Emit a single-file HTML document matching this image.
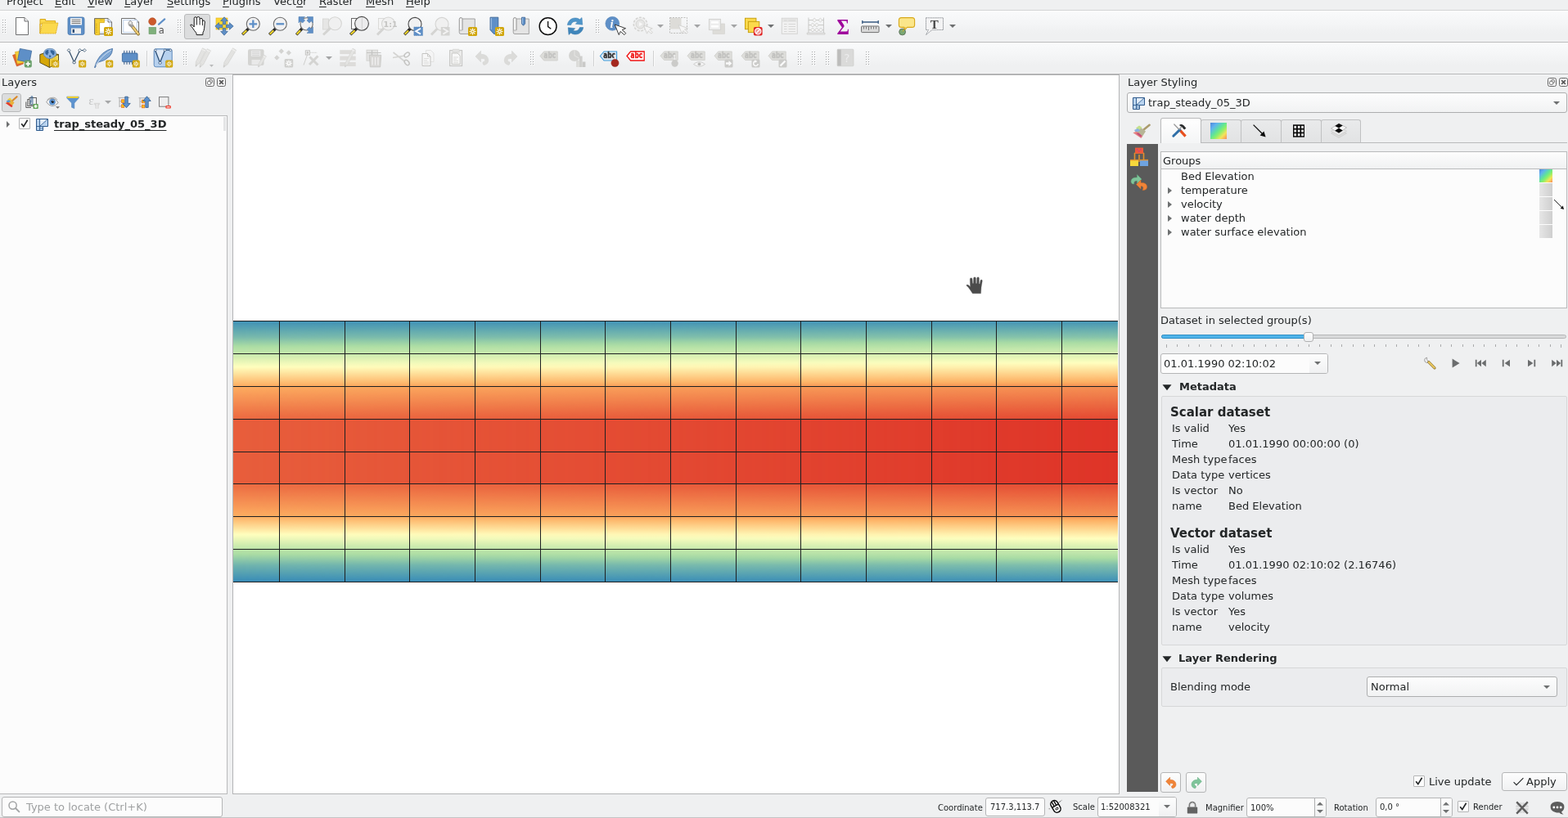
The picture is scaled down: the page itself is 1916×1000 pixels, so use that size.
<!DOCTYPE html>
<html lang="en">
<head>
<meta charset="utf-8">
<title>QGIS - trap_steady_05_3D</title>
<style>
html,body{margin:0;padding:0}
body{width:1916px;height:1000px;overflow:hidden;position:relative;background:#eff0f1;
 font-family:"DejaVu Sans","Liberation Sans",sans-serif;font-size:13px;line-height:16px;color:#232627}
div,svg{position:absolute;box-sizing:border-box}
#root{left:0;top:0;width:1916px;height:1000px;overflow:hidden;will-change:transform}
.t{white-space:nowrap}
.ic{overflow:visible}
u{text-decoration:underline;text-underline-offset:2px;text-decoration-thickness:1px;text-decoration-skip-ink:none}
.tb{left:0;width:1916px;height:38px;background:linear-gradient(to bottom,#ffffff 0px,#f9fafb 2px,#f4f5f6 16px,#eff0f1 28px,#eff0f1 36.5px,#f5f5f6 37px)}
.ln{left:0;width:1916px;height:1px}
.hd{background-image:radial-gradient(circle at 0.5px 0.5px,#c3c4c5 0.6px,transparent 0.7px),radial-gradient(circle at 3.5px 0.5px,#c3c4c5 0.6px,transparent 0.7px);background-size:5px 2px;background-repeat:repeat-y}
.view{background:#fcfcfc;border:1px solid #b9babb}
.edit{background:#fcfcfc;border:1px solid #b4b5b6;border-radius:3px}
.btn{border:1px solid #b4b5b6;border-radius:3px;background:linear-gradient(to bottom,#fdfdfd,#f0f1f2)}
.combo{border:1px solid #adaeaf;border-radius:3px;background:linear-gradient(to bottom,#fdfdfd,#f1f2f3)}
.gb{border:1px solid #d6d7d8;border-radius:2px;background:#ebecee}
.pressed{border:1px solid #b9babb;border-radius:3px;background:#dcddde}
.chk{border:1px solid #b4b5b6;background:#fcfcfc;border-radius:1px}
.dtb{border:1px solid #6c6e6f;border-radius:3px;background:#eff0f1}
</style>
</head>
<body>
<div id="root">
<div class="t" style="left:8px;top:-6px;">Pro<u>j</u>ect</div>
<div class="t" style="left:67px;top:-6px;"><u>E</u>dit</div>
<div class="t" style="left:107px;top:-6px;"><u>V</u>iew</div>
<div class="t" style="left:152px;top:-6px;"><u>L</u>ayer</div>
<div class="t" style="left:204px;top:-6px;"><u>S</u>ettings</div>
<div class="t" style="left:272px;top:-6px;"><u>P</u>lugins</div>
<div class="t" style="left:334px;top:-6px;">Vect<u>o</u>r</div>
<div class="t" style="left:390px;top:-6px;"><u>R</u>aster</div>
<div class="t" style="left:447px;top:-6px;"><u>M</u>esh</div>
<div class="t" style="left:496px;top:-6px;"><u>H</u>elp</div>
<div style="left:0px;top:12px;width:1916px;height:1px;background:#d2d3d4"></div>
<div class="tb" style="left:0px;top:13px;width:1916px;height:38px;"></div>
<div style="left:0px;top:51px;width:1916px;height:1px;background:#b7b8b9"></div>
<div class="tb" style="left:0px;top:52px;width:1916px;height:38px;"></div>
<div style="left:0px;top:90px;width:1916px;height:1px;background:#b3b4b5"></div>
<div style="left:0px;top:91px;width:1916px;height:1px;background:#f5f5f6"></div>
<svg style="left:3px;top:24px" width="6" height="18"><rect x="0" y="0" width="1" height="1" fill="#a6a7a8"/><rect x="1" y="1" width="1" height="1" fill="#fff"/><rect x="3" y="0" width="1" height="1" fill="#a6a7a8"/><rect x="4" y="1" width="1" height="1" fill="#fff"/><rect x="0" y="3" width="1" height="1" fill="#a6a7a8"/><rect x="1" y="4" width="1" height="1" fill="#fff"/><rect x="3" y="3" width="1" height="1" fill="#a6a7a8"/><rect x="4" y="4" width="1" height="1" fill="#fff"/><rect x="0" y="6" width="1" height="1" fill="#a6a7a8"/><rect x="1" y="7" width="1" height="1" fill="#fff"/><rect x="3" y="6" width="1" height="1" fill="#a6a7a8"/><rect x="4" y="7" width="1" height="1" fill="#fff"/><rect x="0" y="9" width="1" height="1" fill="#a6a7a8"/><rect x="1" y="10" width="1" height="1" fill="#fff"/><rect x="3" y="9" width="1" height="1" fill="#a6a7a8"/><rect x="4" y="10" width="1" height="1" fill="#fff"/><rect x="0" y="12" width="1" height="1" fill="#a6a7a8"/><rect x="1" y="13" width="1" height="1" fill="#fff"/><rect x="3" y="12" width="1" height="1" fill="#a6a7a8"/><rect x="4" y="13" width="1" height="1" fill="#fff"/><rect x="0" y="15" width="1" height="1" fill="#a6a7a8"/><rect x="1" y="16" width="1" height="1" fill="#fff"/><rect x="3" y="15" width="1" height="1" fill="#a6a7a8"/><rect x="4" y="16" width="1" height="1" fill="#fff"/></svg>
<svg style="left:217px;top:24px" width="6" height="18"><rect x="0" y="0" width="1" height="1" fill="#a6a7a8"/><rect x="1" y="1" width="1" height="1" fill="#fff"/><rect x="3" y="0" width="1" height="1" fill="#a6a7a8"/><rect x="4" y="1" width="1" height="1" fill="#fff"/><rect x="0" y="3" width="1" height="1" fill="#a6a7a8"/><rect x="1" y="4" width="1" height="1" fill="#fff"/><rect x="3" y="3" width="1" height="1" fill="#a6a7a8"/><rect x="4" y="4" width="1" height="1" fill="#fff"/><rect x="0" y="6" width="1" height="1" fill="#a6a7a8"/><rect x="1" y="7" width="1" height="1" fill="#fff"/><rect x="3" y="6" width="1" height="1" fill="#a6a7a8"/><rect x="4" y="7" width="1" height="1" fill="#fff"/><rect x="0" y="9" width="1" height="1" fill="#a6a7a8"/><rect x="1" y="10" width="1" height="1" fill="#fff"/><rect x="3" y="9" width="1" height="1" fill="#a6a7a8"/><rect x="4" y="10" width="1" height="1" fill="#fff"/><rect x="0" y="12" width="1" height="1" fill="#a6a7a8"/><rect x="1" y="13" width="1" height="1" fill="#fff"/><rect x="3" y="12" width="1" height="1" fill="#a6a7a8"/><rect x="4" y="13" width="1" height="1" fill="#fff"/><rect x="0" y="15" width="1" height="1" fill="#a6a7a8"/><rect x="1" y="16" width="1" height="1" fill="#fff"/><rect x="3" y="15" width="1" height="1" fill="#a6a7a8"/><rect x="4" y="16" width="1" height="1" fill="#fff"/></svg>
<svg style="left:728px;top:24px" width="6" height="18"><rect x="0" y="0" width="1" height="1" fill="#a6a7a8"/><rect x="1" y="1" width="1" height="1" fill="#fff"/><rect x="3" y="0" width="1" height="1" fill="#a6a7a8"/><rect x="4" y="1" width="1" height="1" fill="#fff"/><rect x="0" y="3" width="1" height="1" fill="#a6a7a8"/><rect x="1" y="4" width="1" height="1" fill="#fff"/><rect x="3" y="3" width="1" height="1" fill="#a6a7a8"/><rect x="4" y="4" width="1" height="1" fill="#fff"/><rect x="0" y="6" width="1" height="1" fill="#a6a7a8"/><rect x="1" y="7" width="1" height="1" fill="#fff"/><rect x="3" y="6" width="1" height="1" fill="#a6a7a8"/><rect x="4" y="7" width="1" height="1" fill="#fff"/><rect x="0" y="9" width="1" height="1" fill="#a6a7a8"/><rect x="1" y="10" width="1" height="1" fill="#fff"/><rect x="3" y="9" width="1" height="1" fill="#a6a7a8"/><rect x="4" y="10" width="1" height="1" fill="#fff"/><rect x="0" y="12" width="1" height="1" fill="#a6a7a8"/><rect x="1" y="13" width="1" height="1" fill="#fff"/><rect x="3" y="12" width="1" height="1" fill="#a6a7a8"/><rect x="4" y="13" width="1" height="1" fill="#fff"/><rect x="0" y="15" width="1" height="1" fill="#a6a7a8"/><rect x="1" y="16" width="1" height="1" fill="#fff"/><rect x="3" y="15" width="1" height="1" fill="#a6a7a8"/><rect x="4" y="16" width="1" height="1" fill="#fff"/></svg>
<div class="pressed" style="left:225px;top:17px;width:32px;height:31px;"></div>
<svg class="ic" style="left:15px;top:20px" width="24" height="24" viewBox="0 0 24 24"><path d="M4.5 1.5H15L19.5 6V22.5H4.5Z" fill="#fff" stroke="#6e6f70" stroke-width="1" stroke-linejoin="round"/><path d="M15 1.5V6H19.5" fill="#f3f3f3" stroke="#6e6f70" stroke-width="1" stroke-linejoin="round"/></svg>
<svg class="ic" style="left:48px;top:20px" width="24" height="24" viewBox="0 0 24 24"><path d="M1 21V3.5H7.6V5.6H19.6V9H1Z" fill="#fbd94b" stroke="#d9a81e" stroke-width="1" stroke-linejoin="round"/><path d="M1 21L3.6 8H23L20.2 21Z" fill="#fbd94d" stroke="#d9a81e" stroke-width="1" stroke-dasharray="1.2 0.8" stroke-linejoin="round"/></svg>
<svg class="ic" style="left:81px;top:20px" width="24" height="24" viewBox="0 0 24 24"><rect x="2" y="1" width="20" height="21.5" rx="2.2" fill="#5e8fc7" stroke="#4a78ad" stroke-width="0.8"/><rect x="5" y="2.2" width="14" height="8.3" fill="#f4f4f4"/><path d="M6.5 4.3H17.5M6.5 6.4H17.5M6.5 8.5H17.5" stroke="#666" stroke-width="0.9"/><rect x="6" y="14.5" width="12" height="6.8" fill="#ededed"/><rect x="7.6" y="15.8" width="2.4" height="4.2" fill="#2c4d77"/></svg>
<svg class="ic" style="left:114px;top:20px" width="24" height="24" viewBox="0 0 24 24"><path d="M1.5 2.5H18L22.5 7V21.5H1.5Z" fill="#fff" stroke="#6e6f70" stroke-width="1" stroke-linejoin="round"/><path d="M18 2.5V7H22.5" fill="#f3f3f3" stroke="#6e6f70" stroke-width="1" stroke-linejoin="round"/><rect x="4" y="4.5" width="16.5" height="15" fill="none" stroke="#b8cdea" stroke-width="0.8"/><path d="M2.6 3.2H13.4V7.6H7.6V22.6H2.6Z" fill="#f6cf35" stroke="#d1a60c" stroke-width="0.8"/><path d="M3 9.5H5M3 11.5H5M3 13.5H5M3 15.5H5M3 17.5H5M3 19.5H5M8.5 3.6V5.4M10.5 3.6V5.4" stroke="#d1a60c" stroke-width="0.7"/><rect x="13" y="13" width="11" height="11" rx="1.6" fill="#d1a60c"/><path d="M14.54 18.50L22.46 18.50M15.70 15.70L21.30 21.30M18.50 14.54L18.50 22.46M21.30 15.70L15.70 21.30" stroke="#fff" stroke-width="1.15" fill="none"/><circle cx="18.5" cy="18.5" r="1.10" fill="#d1a60c"/></svg>
<svg class="ic" style="left:147px;top:20px" width="24" height="24" viewBox="0 0 24 24"><path d="M1.5 2.5H18L22.5 7V21.5H1.5Z" fill="#fff" stroke="#6e6f70" stroke-width="1" stroke-linejoin="round"/><path d="M18 2.5V7H22.5" fill="#f3f3f3" stroke="#6e6f70" stroke-width="1" stroke-linejoin="round"/><rect x="3.8" y="4.6" width="16.5" height="15" fill="#fdfdff" stroke="#b8cdea" stroke-width="0.9"/><path d="M14.2 11.6L22 21.6" stroke="#8c7433" stroke-width="3.8" stroke-linecap="round"/><path d="M14.4 11.8L21.8 21.4" stroke="#f1cf7a" stroke-width="2.2" stroke-linecap="round"/><path d="M12.2 5.4A3.6 3.6 0 1 0 16.2 11.2L14.2 9.8L14.6 7.2Z" fill="#e9e9e9" stroke="#8a8a8a" stroke-width="0.9" stroke-linejoin="round"/><path d="M11 10.2L15.2 12.8" stroke="#9a9a9a" stroke-width="2.6"/></svg>
<svg class="ic" style="left:180px;top:20px" width="24" height="24" viewBox="0 0 24 24"><circle cx="6.2" cy="6.3" r="4.5" fill="#cc5a2c" stroke="#b04a22" stroke-width="0.6"/><path d="M14 9.8L21.2 3.4" stroke="#5e8fc7" stroke-width="2.2" stroke-linecap="round"/><rect x="2" y="13.4" width="8.6" height="8.2" fill="#7fb07c" stroke="#6a9a67" stroke-width="0.6"/><text x="13.8" y="21.4" font-family="DejaVu Sans,Liberation Sans,sans-serif" font-size="11.5" fill="#555">a</text></svg>
<svg class="ic" style="left:229px;top:20px" width="24" height="24" viewBox="0 0 24 24"><path d="M8.2 13L8.2 2.4Q8.2 0.8 9.8 0.8Q11.4 0.8 11.4 2.4L11.6 2Q11.8 0.4 13.4 0.5Q15 0.6 15 2.2L15.2 3.4Q15.6 2.2 17 2.4Q18.4 2.6 18.4 4.2L18.5 6Q19 4.8 20.2 5.1Q21.4 5.4 21.3 7L20.6 14.5Q20.2 18 19 19.8L18.8 22.6H11.2L10.9 20.4Q8.6 17.8 6.8 14.8Q5.4 12.4 4 11.6Q3.2 10.6 4.2 10Q6 9.6 8.2 13Z" fill="#fff" stroke="#161616" stroke-width="1" stroke-linejoin="round"/><path d="M11.5 2.4V10.5M15.1 3V10.5M18.45 5.5V11.2" fill="none" stroke="#161616" stroke-width="0.9"/></svg>
<svg class="ic" style="left:262px;top:20px" width="24" height="24" viewBox="0 0 24 24"><rect x="2" y="2" width="14" height="14" fill="#fbd632" stroke="#e0b020" stroke-width="0.6"/><path d="M12 0.8L16.3 5.6H13.7V9.8H10.3V5.6H7.7Z M12 23.2L16.3 18.4H13.7V14.4H10.3V18.4H7.7Z M0.8 12L5.6 7.7V10.3H9.8V13.7H5.6V16.3Z M23.2 12L18.4 7.7V10.3H14.4V13.7H18.4V16.3Z" fill="#5e8fc7" stroke="#3c6595" stroke-width="0.7" stroke-linejoin="round"/></svg>
<svg class="ic" style="left:295px;top:20px" width="24" height="24" viewBox="0 0 24 24"><path d="M1.2 22.3L8.64 14.96" stroke="#2a2a2a" stroke-width="3.4" stroke-linecap="butt"/><path d="M1.70 21.80L6.26 17.31" stroke="#f7d82b" stroke-width="2.1"/><circle cx="14.3" cy="9.3" r="8" fill="#f1f1f2" stroke="#6b6b6b" stroke-width="1.1"/><path d="M9.5 9.3H19.1M14.3 4.5V14.1" stroke="#5e8fc7" stroke-width="2.3"/></svg>
<svg class="ic" style="left:328px;top:20px" width="24" height="24" viewBox="0 0 24 24"><path d="M1.2 22.3L8.64 14.96" stroke="#2a2a2a" stroke-width="3.4" stroke-linecap="butt"/><path d="M1.70 21.80L6.26 17.31" stroke="#f7d82b" stroke-width="2.1"/><circle cx="14.3" cy="9.3" r="8" fill="#f1f1f2" stroke="#6b6b6b" stroke-width="1.1"/><path d="M9.5 9.3H19.1" stroke="#5e8fc7" stroke-width="2.3"/></svg>
<svg class="ic" style="left:361px;top:20px" width="24" height="24" viewBox="0 0 24 24"><path d="M1.2 22.3L8.23 14.77" stroke="#2a2a2a" stroke-width="3.4" stroke-linecap="butt"/><path d="M1.70 21.80L5.98 17.18" stroke="#f7d82b" stroke-width="2.1"/><circle cx="13.6" cy="9.4" r="7.6" fill="#f1f1f2" stroke="#6b6b6b" stroke-width="1.1"/><path d="M4 0.6H11.5L9.3 2.8L11.6 5.1L8.6 8.1L6.3 5.8L4 8Z M21.5 0.6V8L19.3 5.8L17 8.1L14 5.1L16.3 2.8L14 0.6Z M21.5 20.4H14L16.3 18.2L14 15.9L17 12.9L19.3 15.2L21.5 13Z" fill="#5e8fc7" stroke="#4a78ad" stroke-width="0.5"/></svg>
<svg class="ic" style="left:394px;top:20px" width="24" height="24" viewBox="0 0 24 24"><rect x="0.5" y="3" width="7" height="13" fill="#e6e6e5" stroke="#d4d4d2" stroke-width="0.8"/><path d="M1.0 22.5L9.64 14.46" stroke="#d4d4d2" stroke-width="3"/><circle cx="15.3" cy="8.8" r="8" fill="#f0f0f0" stroke="#d4d4d2" stroke-width="1.1"/></svg>
<svg class="ic" style="left:427px;top:20px" width="24" height="24" viewBox="0 0 24 24"><rect x="2.5" y="2.5" width="7" height="13" fill="#fafafa" stroke="#6b6b6b" stroke-width="1"/><path d="M1.2 22.3L9.06 14.74" stroke="#2a2a2a" stroke-width="3.4" stroke-linecap="butt"/><path d="M1.70 21.80L6.55 17.16" stroke="#f7d82b" stroke-width="2.1"/><circle cx="15" cy="8.8" r="8.4" fill="#ececed" stroke="#4a4a4a" stroke-width="1.1"/><path d="M15.4 2V15.5" stroke="#c9c9c9" stroke-width="0.8"/></svg>
<svg class="ic" style="left:460px;top:20px" width="24" height="24" viewBox="0 0 24 24"><rect x="2.5" y="2.5" width="7" height="13" fill="#f4f4f4" stroke="#d4d4d2" stroke-width="0.8"/><path d="M1.0 22.5L8.84 14.66" stroke="#d4d4d2" stroke-width="3"/><circle cx="14.5" cy="9" r="8" fill="#f0f0f0" stroke="#d4d4d2" stroke-width="1.1"/><text x="8.6" y="12.8" font-family="DejaVu Sans,Liberation Sans,sans-serif" font-weight="bold" font-size="9.5" fill="#c4c4c2">1:1</text></svg>
<svg class="ic" style="left:493px;top:20px" width="24" height="24" viewBox="0 0 24 24"><path d="M1.2 22.3L8.34 15.06" stroke="#2a2a2a" stroke-width="3.4" stroke-linecap="butt"/><path d="M1.70 21.80L6.06 17.37" stroke="#f7d82b" stroke-width="2.1"/><circle cx="14" cy="9.4" r="8" fill="#f1f1f2" stroke="#4a4a4a" stroke-width="1.1"/><rect x="12.8" y="13" width="10.7" height="10.5" fill="#5e8fc7" stroke="#4a78ad" stroke-width="0.6" stroke-dasharray="1 0.7"/><path d="M21 14.8L15.2 18.2L21 21.6" fill="none" stroke="#fff" stroke-width="1.9"/></svg>
<svg class="ic" style="left:526px;top:20px" width="24" height="24" viewBox="0 0 24 24"><path d="M1.0 22.5L8.34 15.06" stroke="#d4d4d2" stroke-width="3"/><circle cx="14" cy="9.4" r="8" fill="#f0f0f0" stroke="#d4d4d2" stroke-width="1.1"/><rect x="12.8" y="13" width="10.7" height="10.5" fill="#d4d4d2"/><path d="M15.3 14.8L21.1 18.2L15.3 21.6" fill="none" stroke="#f2f2f2" stroke-width="1.9"/></svg>
<svg class="ic" style="left:559px;top:20px" width="24" height="24" viewBox="0 0 24 24"><path d="M4.5 3H21.3V21.5H4Q2.2 21.5 2.2 19.5V3.5Q2.2 1.5 4.2 1.5Q6 1.5 6 3.5V17" fill="#e4e4e4" stroke="#9a9a9a" stroke-width="0.9" stroke-linejoin="round"/><path d="M2.5 3.5Q2.5 1.8 4.2 1.8Q5.8 1.8 5.8 3.5V17H2.5Z" fill="#f6f6f6" stroke="#9a9a9a" stroke-width="0.7"/><rect x="13" y="13" width="11" height="11" rx="1.6" fill="#d1a60c"/><path d="M14.54 18.50L22.46 18.50M15.70 15.70L21.30 21.30M18.50 14.54L18.50 22.46M21.30 15.70L15.70 21.30" stroke="#fff" stroke-width="1.15" fill="none"/><circle cx="18.5" cy="18.5" r="1.10" fill="#d1a60c"/></svg>
<svg class="ic" style="left:592px;top:20px" width="24" height="24" viewBox="0 0 24 24"><path d="M7 1.2H16.8V21.5H11.5L7 16.5Z" fill="#5e8fc7" stroke="#3c6595" stroke-width="0.9" stroke-linejoin="round"/><path d="M8.3 2V16" stroke="#a9c7ea" stroke-width="1"/><rect x="13" y="13" width="11" height="11" rx="1.6" fill="#d1a60c"/><path d="M14.54 18.50L22.46 18.50M15.70 15.70L21.30 21.30M18.50 14.54L18.50 22.46M21.30 15.70L15.70 21.30" stroke="#fff" stroke-width="1.15" fill="none"/><circle cx="18.5" cy="18.5" r="1.10" fill="#d1a60c"/></svg>
<svg class="ic" style="left:625px;top:20px" width="24" height="24" viewBox="0 0 24 24"><path d="M4.5 3H21.3V21.5H4Q2.2 21.5 2.2 19.5V3.5Q2.2 1.5 4.2 1.5Q6 1.5 6 3.5V17" fill="#e4e4e4" stroke="#9a9a9a" stroke-width="0.9" stroke-linejoin="round"/><path d="M2.5 3.5Q2.5 1.8 4.2 1.8Q5.8 1.8 5.8 3.5V17H2.5Z" fill="#f6f6f6" stroke="#9a9a9a" stroke-width="0.7"/><path d="M12.5 1.2H16.6V9L14.5 11.3L12.5 9Z" fill="#5e8fc7" stroke="#3c6595" stroke-width="0.8"/><path d="M13.5 2V9" stroke="#a9c7ea" stroke-width="0.9"/></svg>
<svg class="ic" style="left:658px;top:20px" width="24" height="24" viewBox="0 0 24 24"><circle cx="11.6" cy="12.2" r="10.4" fill="#fff" stroke="#0d0d0d" stroke-width="1.5"/><path d="M11.6 6V12.6L15.3 15.2" fill="none" stroke="#0d0d0d" stroke-width="1.3"/></svg>
<svg class="ic" style="left:691px;top:20px" width="24" height="24" viewBox="0 0 24 24"><path d="M2.3 10.5A9.6 9.6 0 0 1 17.5 3.8L20 1.5L20.8 10.2L12.3 9.3L14.6 6.8A5.6 5.6 0 0 0 6.6 10.5Z" fill="#4f95c9" stroke="#3d7eb3" stroke-width="0.5"/><path d="M21.7 13.5A9.6 9.6 0 0 1 6.5 20.2L4 22.5L3.2 13.8L11.7 14.7L9.4 17.2A5.6 5.6 0 0 0 17.4 13.5Z" fill="#3f86bb" stroke="#3474a8" stroke-width="0.5"/></svg>
<svg class="ic" style="left:739px;top:20px" width="24" height="24" viewBox="0 0 24 24"><circle cx="9.3" cy="8.8" r="8.4" fill="#5e8fc7" stroke="#4f7fb6" stroke-width="0.6"/><text x="6.4" y="14" font-family="Liberation Serif,DejaVu Serif,serif" font-style="italic" font-weight="bold" font-size="14.5" fill="#fff">i</text><path d="M12.20 10.00L17.28 22.58L19.15 18.39L23.90 22.58L25.76 20.56L21.16 16.43L25.54 14.66Z" fill="#fff" stroke="#3a3a3a" stroke-width="1" stroke-linejoin="round"/></svg>
<svg class="ic" style="left:773px;top:20px" width="24" height="24" viewBox="0 0 24 24"><circle cx="9.5" cy="9.5" r="8.2" fill="#f0f0f0" stroke="#d4d4d2" stroke-width="1.6" stroke-dasharray="3 1.6"/><circle cx="9.5" cy="9.5" r="5.4" fill="#e6e6e5" stroke="#d4d4d2" stroke-width="1"/><path d="M7.8 6.8V12.2L12.3 9.5Z" fill="#f8f8f8"/><path d="M13.50 11.00L17.59 21.13L19.10 17.75L22.92 21.13L24.41 19.50L20.72 16.18L24.24 14.76Z" fill="#f6f6f6" stroke="#d4d4d2" stroke-width="1" stroke-linejoin="round"/></svg>
<svg class="ic" style="left:817px;top:20px" width="24" height="24" viewBox="0 0 24 24"><rect x="2" y="2" width="13.5" height="13.5" fill="#dddcd8"/><rect x="1.5" y="1.5" width="21" height="19" fill="none" stroke="#bdbdbb" stroke-width="1" stroke-dasharray="2 1.4"/><path d="M12.00 10.50L16.31 21.16L17.89 17.61L21.92 21.16L23.49 19.45L19.60 15.95L23.30 14.45Z" fill="#f6f6f6" stroke="#d4d4d2" stroke-width="1" stroke-linejoin="round"/></svg>
<svg class="ic" style="left:863px;top:20px" width="24" height="24" viewBox="0 0 24 24"><rect x="8" y="9" width="14.5" height="12.5" fill="#dddcd8" stroke="#d4d4d2" stroke-width="0.7"/><rect x="3.5" y="3.5" width="14" height="13" fill="#eeeeee" stroke="#d4d4d2" stroke-width="1.1"/><rect x="6" y="6" width="9" height="2.6" fill="#fff"/><rect x="6" y="11" width="9" height="2.6" fill="#fff"/></svg>
<svg class="ic" style="left:908px;top:20px" width="24" height="24" viewBox="0 0 24 24"><rect x="2.5" y="2.3" width="13.4" height="13.4" fill="#fbd94b" stroke="#c9a211" stroke-width="1"/><rect x="6.4" y="6.4" width="13.4" height="13.2" fill="#fbd94b" stroke="#c9a211" stroke-width="1"/><rect x="12.9" y="13.1" width="10.7" height="10.5" rx="1.8" fill="#e02424"/><circle cx="18.25" cy="18.35" r="3.7" fill="#f29a9a" stroke="#fff" stroke-width="1.1"/><path d="M15.7 20.9L20.8 15.8" stroke="#fff" stroke-width="1.3"/></svg>
<svg class="ic" style="left:952px;top:20px" width="24" height="24" viewBox="0 0 24 24"><rect x="3.3" y="2.3" width="19" height="19" fill="#f1f1f1" stroke="#d4d4d2" stroke-width="1"/><rect x="3.8" y="2.8" width="18" height="4.2" fill="#e6e6e5"/><path d="M6 5H9.5M11.5 5H20M6 9.5H9.5M11.5 9.5H20M6 12.5H9.5M11.5 12.5H20M6 15.5H9.5M11.5 15.5H20M6 18.5H9.5M11.5 18.5H20" stroke="#d4d4d2" stroke-width="0.9"/></svg>
<svg class="ic" style="left:985px;top:20px" width="24" height="24" viewBox="0 0 24 24"><path d="M3 1.6V20M21.4 1.6V20M3 4.6H21.4M3 10.6H21.4M3 16.6H21.4" fill="none" stroke="#c4c4c2" stroke-width="0.9"/><path d="M1.2 20.2H23V22H1.2Z" fill="#ececec" stroke="#c4c4c2" stroke-width="0.7"/><path d="M7.799999999999999 4.6l2.4 -2.3l2.4 2.3l-2.4 2.3z" fill="#f6f6f6" stroke="#c4c4c2" stroke-width="0.7"/><path d="M14.999999999999998 4.6l2.4 -2.3l2.4 2.3l-2.4 2.3z" fill="#f6f6f6" stroke="#c4c4c2" stroke-width="0.7"/><path d="M5.6 10.6l2.4 -2.3l2.4 2.3l-2.4 2.3z" fill="#f6f6f6" stroke="#c4c4c2" stroke-width="0.7"/><path d="M10.6 10.6l2.4 -2.3l2.4 2.3l-2.4 2.3z" fill="#f6f6f6" stroke="#c4c4c2" stroke-width="0.7"/><path d="M5.6 16.6l2.4 -2.3l2.4 2.3l-2.4 2.3z" fill="#f6f6f6" stroke="#c4c4c2" stroke-width="0.7"/><path d="M10.6 16.6l2.4 -2.3l2.4 2.3l-2.4 2.3z" fill="#f6f6f6" stroke="#c4c4c2" stroke-width="0.7"/><path d="M15.6 16.6l2.4 -2.3l2.4 2.3l-2.4 2.3z" fill="#f6f6f6" stroke="#c4c4c2" stroke-width="0.7"/></svg>
<svg class="ic" style="left:1018px;top:20px" width="24" height="24" viewBox="0 0 24 24"><text x="4.6" y="21.6" font-family="Liberation Serif,DejaVu Serif,serif" font-weight="bold" font-size="27" fill="#9f059c" textLength="15.5" lengthAdjust="spacingAndGlyphs">Σ</text></svg>
<svg class="ic" style="left:1051px;top:20px" width="24" height="24" viewBox="0 0 24 24"><path d="M2.8 7H22.2" stroke="#2c5079" stroke-width="1.4"/><path d="M2.8 5V9M22.2 5V9" stroke="#2c5079" stroke-width="1.2"/><rect x="1.6" y="12" width="21.4" height="7.6" rx="0.8" fill="#d9d9d9" stroke="#6f6f6f" stroke-width="1"/><path d="M4.5 12.5V15.5M7.5 12.5V15.5M10.5 12.5V17M13.5 12.5V15.5M16.5 12.5V15.5M19.5 12.5V15.5" stroke="#6f6f6f" stroke-width="0.9"/></svg>
<svg class="ic" style="left:1096px;top:20px" width="24" height="24" viewBox="0 0 24 24"><path d="M5.5 1.6H18.5Q21.6 1.6 21.6 4.6V10.4Q21.6 13.4 18.5 13.4H12.5L8 18.5L9 13.4H5.5Q2.4 13.4 2.4 10.4V4.6Q2.4 1.6 5.5 1.6Z" fill="#fbe68a" stroke="#d8a81a" stroke-width="1.1" stroke-linejoin="round"/><circle cx="6.6" cy="19" r="3.9" fill="#7aa874" stroke="#5c6f5a" stroke-width="0.9"/><path d="M7 18.6L10.5 13.5" stroke="#d8a81a" stroke-width="1"/></svg>
<svg class="ic" style="left:1130px;top:20px" width="24" height="24" viewBox="0 0 24 24"><path d="M1.5 1.8H22.5V16.5H9L1.5 22.6L4.5 16.5H1.5Z" fill="#f3f3f4" stroke="#8b8f94" stroke-width="0.9" stroke-dasharray="1.5 0.6" stroke-linejoin="round"/><text x="6.8" y="14.6" font-family="Liberation Serif,DejaVu Serif,serif" font-weight="bold" font-size="15" fill="#474747">T</text></svg>
<svg class="ic" style="left:803px;top:30px" width="8" height="4" viewBox="0 0 8 4"><path d="M0 0H8L4 4Z" fill="#a3a4a5"/></svg>
<svg class="ic" style="left:848px;top:30px" width="8" height="4" viewBox="0 0 8 4"><path d="M0 0H8L4 4Z" fill="#a3a4a5"/></svg>
<svg class="ic" style="left:893px;top:30px" width="8" height="4" viewBox="0 0 8 4"><path d="M0 0H8L4 4Z" fill="#a3a4a5"/></svg>
<svg class="ic" style="left:938px;top:30px" width="8" height="4" viewBox="0 0 8 4"><path d="M0 0H8L4 4Z" fill="#6e7071"/></svg>
<svg class="ic" style="left:1082px;top:30px" width="8" height="4" viewBox="0 0 8 4"><path d="M0 0H8L4 4Z" fill="#6e7071"/></svg>
<svg class="ic" style="left:1160px;top:30px" width="8" height="4" viewBox="0 0 8 4"><path d="M0 0H8L4 4Z" fill="#6e7071"/></svg>
<svg style="left:3px;top:63px" width="6" height="18"><rect x="0" y="0" width="1" height="1" fill="#a6a7a8"/><rect x="1" y="1" width="1" height="1" fill="#fff"/><rect x="3" y="0" width="1" height="1" fill="#a6a7a8"/><rect x="4" y="1" width="1" height="1" fill="#fff"/><rect x="0" y="3" width="1" height="1" fill="#a6a7a8"/><rect x="1" y="4" width="1" height="1" fill="#fff"/><rect x="3" y="3" width="1" height="1" fill="#a6a7a8"/><rect x="4" y="4" width="1" height="1" fill="#fff"/><rect x="0" y="6" width="1" height="1" fill="#a6a7a8"/><rect x="1" y="7" width="1" height="1" fill="#fff"/><rect x="3" y="6" width="1" height="1" fill="#a6a7a8"/><rect x="4" y="7" width="1" height="1" fill="#fff"/><rect x="0" y="9" width="1" height="1" fill="#a6a7a8"/><rect x="1" y="10" width="1" height="1" fill="#fff"/><rect x="3" y="9" width="1" height="1" fill="#a6a7a8"/><rect x="4" y="10" width="1" height="1" fill="#fff"/><rect x="0" y="12" width="1" height="1" fill="#a6a7a8"/><rect x="1" y="13" width="1" height="1" fill="#fff"/><rect x="3" y="12" width="1" height="1" fill="#a6a7a8"/><rect x="4" y="13" width="1" height="1" fill="#fff"/><rect x="0" y="15" width="1" height="1" fill="#a6a7a8"/><rect x="1" y="16" width="1" height="1" fill="#fff"/><rect x="3" y="15" width="1" height="1" fill="#a6a7a8"/><rect x="4" y="16" width="1" height="1" fill="#fff"/></svg>
<svg style="left:224px;top:63px" width="6" height="18"><rect x="0" y="0" width="1" height="1" fill="#a6a7a8"/><rect x="1" y="1" width="1" height="1" fill="#fff"/><rect x="3" y="0" width="1" height="1" fill="#a6a7a8"/><rect x="4" y="1" width="1" height="1" fill="#fff"/><rect x="0" y="3" width="1" height="1" fill="#a6a7a8"/><rect x="1" y="4" width="1" height="1" fill="#fff"/><rect x="3" y="3" width="1" height="1" fill="#a6a7a8"/><rect x="4" y="4" width="1" height="1" fill="#fff"/><rect x="0" y="6" width="1" height="1" fill="#a6a7a8"/><rect x="1" y="7" width="1" height="1" fill="#fff"/><rect x="3" y="6" width="1" height="1" fill="#a6a7a8"/><rect x="4" y="7" width="1" height="1" fill="#fff"/><rect x="0" y="9" width="1" height="1" fill="#a6a7a8"/><rect x="1" y="10" width="1" height="1" fill="#fff"/><rect x="3" y="9" width="1" height="1" fill="#a6a7a8"/><rect x="4" y="10" width="1" height="1" fill="#fff"/><rect x="0" y="12" width="1" height="1" fill="#a6a7a8"/><rect x="1" y="13" width="1" height="1" fill="#fff"/><rect x="3" y="12" width="1" height="1" fill="#a6a7a8"/><rect x="4" y="13" width="1" height="1" fill="#fff"/><rect x="0" y="15" width="1" height="1" fill="#a6a7a8"/><rect x="1" y="16" width="1" height="1" fill="#fff"/><rect x="3" y="15" width="1" height="1" fill="#a6a7a8"/><rect x="4" y="16" width="1" height="1" fill="#fff"/></svg>
<svg style="left:648px;top:63px" width="6" height="18"><rect x="0" y="0" width="1" height="1" fill="#a6a7a8"/><rect x="1" y="1" width="1" height="1" fill="#fff"/><rect x="3" y="0" width="1" height="1" fill="#a6a7a8"/><rect x="4" y="1" width="1" height="1" fill="#fff"/><rect x="0" y="3" width="1" height="1" fill="#a6a7a8"/><rect x="1" y="4" width="1" height="1" fill="#fff"/><rect x="3" y="3" width="1" height="1" fill="#a6a7a8"/><rect x="4" y="4" width="1" height="1" fill="#fff"/><rect x="0" y="6" width="1" height="1" fill="#a6a7a8"/><rect x="1" y="7" width="1" height="1" fill="#fff"/><rect x="3" y="6" width="1" height="1" fill="#a6a7a8"/><rect x="4" y="7" width="1" height="1" fill="#fff"/><rect x="0" y="9" width="1" height="1" fill="#a6a7a8"/><rect x="1" y="10" width="1" height="1" fill="#fff"/><rect x="3" y="9" width="1" height="1" fill="#a6a7a8"/><rect x="4" y="10" width="1" height="1" fill="#fff"/><rect x="0" y="12" width="1" height="1" fill="#a6a7a8"/><rect x="1" y="13" width="1" height="1" fill="#fff"/><rect x="3" y="12" width="1" height="1" fill="#a6a7a8"/><rect x="4" y="13" width="1" height="1" fill="#fff"/><rect x="0" y="15" width="1" height="1" fill="#a6a7a8"/><rect x="1" y="16" width="1" height="1" fill="#fff"/><rect x="3" y="15" width="1" height="1" fill="#a6a7a8"/><rect x="4" y="16" width="1" height="1" fill="#fff"/></svg>
<svg style="left:975px;top:63px" width="6" height="18"><rect x="0" y="0" width="1" height="1" fill="#a6a7a8"/><rect x="1" y="1" width="1" height="1" fill="#fff"/><rect x="3" y="0" width="1" height="1" fill="#a6a7a8"/><rect x="4" y="1" width="1" height="1" fill="#fff"/><rect x="0" y="3" width="1" height="1" fill="#a6a7a8"/><rect x="1" y="4" width="1" height="1" fill="#fff"/><rect x="3" y="3" width="1" height="1" fill="#a6a7a8"/><rect x="4" y="4" width="1" height="1" fill="#fff"/><rect x="0" y="6" width="1" height="1" fill="#a6a7a8"/><rect x="1" y="7" width="1" height="1" fill="#fff"/><rect x="3" y="6" width="1" height="1" fill="#a6a7a8"/><rect x="4" y="7" width="1" height="1" fill="#fff"/><rect x="0" y="9" width="1" height="1" fill="#a6a7a8"/><rect x="1" y="10" width="1" height="1" fill="#fff"/><rect x="3" y="9" width="1" height="1" fill="#a6a7a8"/><rect x="4" y="10" width="1" height="1" fill="#fff"/><rect x="0" y="12" width="1" height="1" fill="#a6a7a8"/><rect x="1" y="13" width="1" height="1" fill="#fff"/><rect x="3" y="12" width="1" height="1" fill="#a6a7a8"/><rect x="4" y="13" width="1" height="1" fill="#fff"/><rect x="0" y="15" width="1" height="1" fill="#a6a7a8"/><rect x="1" y="16" width="1" height="1" fill="#fff"/><rect x="3" y="15" width="1" height="1" fill="#a6a7a8"/><rect x="4" y="16" width="1" height="1" fill="#fff"/></svg>
<svg style="left:992px;top:63px" width="6" height="18"><rect x="0" y="0" width="1" height="1" fill="#a6a7a8"/><rect x="1" y="1" width="1" height="1" fill="#fff"/><rect x="3" y="0" width="1" height="1" fill="#a6a7a8"/><rect x="4" y="1" width="1" height="1" fill="#fff"/><rect x="0" y="3" width="1" height="1" fill="#a6a7a8"/><rect x="1" y="4" width="1" height="1" fill="#fff"/><rect x="3" y="3" width="1" height="1" fill="#a6a7a8"/><rect x="4" y="4" width="1" height="1" fill="#fff"/><rect x="0" y="6" width="1" height="1" fill="#a6a7a8"/><rect x="1" y="7" width="1" height="1" fill="#fff"/><rect x="3" y="6" width="1" height="1" fill="#a6a7a8"/><rect x="4" y="7" width="1" height="1" fill="#fff"/><rect x="0" y="9" width="1" height="1" fill="#a6a7a8"/><rect x="1" y="10" width="1" height="1" fill="#fff"/><rect x="3" y="9" width="1" height="1" fill="#a6a7a8"/><rect x="4" y="10" width="1" height="1" fill="#fff"/><rect x="0" y="12" width="1" height="1" fill="#a6a7a8"/><rect x="1" y="13" width="1" height="1" fill="#fff"/><rect x="3" y="12" width="1" height="1" fill="#a6a7a8"/><rect x="4" y="13" width="1" height="1" fill="#fff"/><rect x="0" y="15" width="1" height="1" fill="#a6a7a8"/><rect x="1" y="16" width="1" height="1" fill="#fff"/><rect x="3" y="15" width="1" height="1" fill="#a6a7a8"/><rect x="4" y="16" width="1" height="1" fill="#fff"/></svg>
<svg style="left:1009px;top:63px" width="6" height="18"><rect x="0" y="0" width="1" height="1" fill="#a6a7a8"/><rect x="1" y="1" width="1" height="1" fill="#fff"/><rect x="3" y="0" width="1" height="1" fill="#a6a7a8"/><rect x="4" y="1" width="1" height="1" fill="#fff"/><rect x="0" y="3" width="1" height="1" fill="#a6a7a8"/><rect x="1" y="4" width="1" height="1" fill="#fff"/><rect x="3" y="3" width="1" height="1" fill="#a6a7a8"/><rect x="4" y="4" width="1" height="1" fill="#fff"/><rect x="0" y="6" width="1" height="1" fill="#a6a7a8"/><rect x="1" y="7" width="1" height="1" fill="#fff"/><rect x="3" y="6" width="1" height="1" fill="#a6a7a8"/><rect x="4" y="7" width="1" height="1" fill="#fff"/><rect x="0" y="9" width="1" height="1" fill="#a6a7a8"/><rect x="1" y="10" width="1" height="1" fill="#fff"/><rect x="3" y="9" width="1" height="1" fill="#a6a7a8"/><rect x="4" y="10" width="1" height="1" fill="#fff"/><rect x="0" y="12" width="1" height="1" fill="#a6a7a8"/><rect x="1" y="13" width="1" height="1" fill="#fff"/><rect x="3" y="12" width="1" height="1" fill="#a6a7a8"/><rect x="4" y="13" width="1" height="1" fill="#fff"/><rect x="0" y="15" width="1" height="1" fill="#a6a7a8"/><rect x="1" y="16" width="1" height="1" fill="#fff"/><rect x="3" y="15" width="1" height="1" fill="#a6a7a8"/><rect x="4" y="16" width="1" height="1" fill="#fff"/></svg>
<svg style="left:1058px;top:63px" width="6" height="18"><rect x="0" y="0" width="1" height="1" fill="#a6a7a8"/><rect x="1" y="1" width="1" height="1" fill="#fff"/><rect x="3" y="0" width="1" height="1" fill="#a6a7a8"/><rect x="4" y="1" width="1" height="1" fill="#fff"/><rect x="0" y="3" width="1" height="1" fill="#a6a7a8"/><rect x="1" y="4" width="1" height="1" fill="#fff"/><rect x="3" y="3" width="1" height="1" fill="#a6a7a8"/><rect x="4" y="4" width="1" height="1" fill="#fff"/><rect x="0" y="6" width="1" height="1" fill="#a6a7a8"/><rect x="1" y="7" width="1" height="1" fill="#fff"/><rect x="3" y="6" width="1" height="1" fill="#a6a7a8"/><rect x="4" y="7" width="1" height="1" fill="#fff"/><rect x="0" y="9" width="1" height="1" fill="#a6a7a8"/><rect x="1" y="10" width="1" height="1" fill="#fff"/><rect x="3" y="9" width="1" height="1" fill="#a6a7a8"/><rect x="4" y="10" width="1" height="1" fill="#fff"/><rect x="0" y="12" width="1" height="1" fill="#a6a7a8"/><rect x="1" y="13" width="1" height="1" fill="#fff"/><rect x="3" y="12" width="1" height="1" fill="#a6a7a8"/><rect x="4" y="13" width="1" height="1" fill="#fff"/><rect x="0" y="15" width="1" height="1" fill="#a6a7a8"/><rect x="1" y="16" width="1" height="1" fill="#fff"/><rect x="3" y="15" width="1" height="1" fill="#a6a7a8"/><rect x="4" y="16" width="1" height="1" fill="#fff"/></svg>
<div style="left:179px;top:62px;width:1px;height:19px;background:#d0d1d2"></div>
<div style="left:180px;top:62px;width:1px;height:19px;background:#fbfbfb"></div>
<div style="left:725px;top:62px;width:1px;height:19px;background:#d0d1d2"></div>
<div style="left:726px;top:62px;width:1px;height:19px;background:#fbfbfb"></div>
<div style="left:798px;top:62px;width:1px;height:19px;background:#d0d1d2"></div>
<div style="left:799px;top:62px;width:1px;height:19px;background:#fbfbfb"></div>
<svg class="ic" style="left:15px;top:59px" width="24" height="24" viewBox="0 0 24 24"><path d="M0.5 8.5L8.5 5.5L13.5 19L5.5 22Z" fill="#e0662e" stroke="#c2501f" stroke-width="0.6"/><path d="M3.5 4.5L11.5 3.2L14 17.5L6 19Z" fill="#f5cf3a" stroke="#d2a415" stroke-width="0.6"/><path d="M9.3 0.4L23.7 3.2L21 17.4L6.6 14.6Z" fill="#5e8fc7" stroke="#3c6595" stroke-width="0.7"/><rect x="14.8" y="14.6" width="9" height="9" rx="1.8" fill="#6aa06a"/><path d="M19.3 16.3V21.9M16.5 19.1H22.1" stroke="#fff" stroke-width="1.7"/></svg>
<svg class="ic" style="left:48px;top:59px" width="24" height="24" viewBox="0 0 24 24"><path d="M0.8 7.6L10 4.6L23.4 7.6V17.6L12.4 23.4L0.8 17.6Z" fill="#d6a708" stroke="#3e3208" stroke-width="0.8" stroke-linejoin="round"/><path d="M12.4 13L23.4 7.6V17.6L12.4 23.4Z" fill="#fbe469" stroke="#3e3208" stroke-width="0.7" stroke-linejoin="round"/><path d="M14.2 12.4V22.4M16.2 11.4V21.4M18.2 10.4V20.4M20.2 9.4V19.4" stroke="#d6a708" stroke-width="0.8"/><path d="M5.2 8.2Q5 0.3 13 0.3Q21 0.3 20.6 8.2Q17 12.6 12.6 12.8Q8 12.4 5.2 8.2Z" fill="#8db2df" stroke="#55789f" stroke-width="0.6"/><path d="M7.2 4.2Q9 1.6 11.4 2.2Q10.6 4 11.6 5.4Q10 6.2 10.4 8.4Q8.4 8.6 7.4 6.6Z M13.4 2.6Q16.4 1.6 18.6 4Q19.2 7 17.4 8.6Q15.8 8.4 15.4 6.4Q13.4 5.4 13.4 2.6Z M11.8 8.8Q13.6 8.2 14.6 9.6Q14 11.6 12.4 11.6Z" fill="#33639a"/><rect x="15.2" y="14.6" width="9" height="9" rx="1.6" fill="#d1a60c"/><path d="M16.46 19.10L22.94 19.10M17.41 16.81L21.99 21.39M19.70 15.86L19.70 22.34M21.99 16.81L17.41 21.39" stroke="#fff" stroke-width="0.95" fill="none"/><circle cx="19.7" cy="19.1" r="0.90" fill="#d1a60c"/></svg>
<svg class="ic" style="left:81px;top:59px" width="24" height="24" viewBox="0 0 24 24"><path d="M3 2.5L9.6 17L16.6 2.5H22.5" fill="none" stroke="#2e4a66" stroke-width="1.2" stroke-linejoin="round"/><path d="M3 0.6L4.9 2.5L3 4.4L1.1 2.5Z M16.6 0.6L18.5 2.5L16.6 4.4L14.7 2.5Z M22.3 0.6L24.2 2.5L22.3 4.4L20.4 2.5Z" fill="#fff" stroke="#2e4a66" stroke-width="0.8"/><circle cx="9.6" cy="17.3" r="1.6" fill="#fff" stroke="#2e4a66" stroke-width="0.9"/><rect x="15.2" y="14.6" width="9" height="9" rx="1.6" fill="#d1a60c"/><path d="M16.46 19.10L22.94 19.10M17.41 16.81L21.99 21.39M19.70 15.86L19.70 22.34M21.99 16.81L17.41 21.39" stroke="#fff" stroke-width="0.95" fill="none"/><circle cx="19.7" cy="19.1" r="0.90" fill="#d1a60c"/></svg>
<svg class="ic" style="left:114px;top:59px" width="24" height="24" viewBox="0 0 24 24"><path d="M1.5 23.5Q4.5 12.5 11.5 6.2Q17 1.5 23.5 0.4Q23.5 6 20 9.8Q14.5 15.5 5.8 17.2Q3.2 20 2.4 23.6Z" fill="#7ea6d3" stroke="#3f6a9e" stroke-width="0.8" stroke-linejoin="round"/><path d="M3 21Q9 10 22 2" fill="none" stroke="#dbe8f6" stroke-width="0.9"/><rect x="15.2" y="14.6" width="9" height="9" rx="1.6" fill="#d1a60c"/><path d="M16.46 19.10L22.94 19.10M17.41 16.81L21.99 21.39M19.70 15.86L19.70 22.34M21.99 16.81L17.41 21.39" stroke="#fff" stroke-width="0.95" fill="none"/><circle cx="19.7" cy="19.1" r="0.90" fill="#d1a60c"/></svg>
<svg class="ic" style="left:148px;top:59px" width="24" height="24" viewBox="0 0 24 24"><path d="M3.8 2.8V6.2M7 2.8V6.2M10.2 2.8V6.2M13.4 2.8V6.2M16.6 2.8V6.2M3.8 16.5V19.8M7 16.5V19.8M10.2 16.5V19.8M13.4 16.5V19.8" stroke="#2e5380" stroke-width="1"/><rect x="1.4" y="6" width="18.6" height="10.6" rx="1" fill="#5e8fc7" stroke="#3a679c" stroke-width="0.9"/><rect x="13.8" y="14.6" width="9" height="9" rx="1.6" fill="#d1a60c"/><path d="M15.06 19.10L21.54 19.10M16.01 16.81L20.59 21.39M18.30 15.86L18.30 22.34M20.59 16.81L16.01 21.39" stroke="#fff" stroke-width="0.95" fill="none"/><circle cx="18.3" cy="19.1" r="0.90" fill="#d1a60c"/></svg>
<svg class="ic" style="left:187px;top:59px" width="24" height="24" viewBox="0 0 24 24"><rect x="1.2" y="0.8" width="22" height="22" rx="2.4" fill="#b7d1ee" stroke="#4f7fb5" stroke-width="0.9"/><path d="M2.5 2.2L8.5 17.5L14.5 2.2H21.5" fill="#dfe9f5" stroke="#2d4f77" stroke-width="1.3" stroke-linejoin="round"/><circle cx="2.9" cy="2.4" r="1.3" fill="#fff" stroke="#2d4f77" stroke-width="0.7"/><circle cx="14.6" cy="2.4" r="1.3" fill="#fff" stroke="#2d4f77" stroke-width="0.7"/><circle cx="21.3" cy="2.4" r="1.3" fill="#fff" stroke="#2d4f77" stroke-width="0.7"/><circle cx="8.6" cy="17.8" r="1.6" fill="#fff" stroke="#2d4f77" stroke-width="0.8"/><rect x="15.2" y="14.6" width="9" height="9" rx="1.6" fill="#d1a60c"/><path d="M16.46 19.10L22.94 19.10M17.41 16.81L21.99 21.39M19.70 15.86L19.70 22.34M21.99 16.81L17.41 21.39" stroke="#fff" stroke-width="0.95" fill="none"/><circle cx="19.7" cy="19.1" r="0.90" fill="#d1a60c"/></svg>
<svg class="ic" style="left:236px;top:59px" width="24" height="24" viewBox="0 0 24 24"><g transform="translate(3 22.5) rotate(26.0)"><path d="M0 0L-2.4 -5.52V-24.150569351466643H2.4V-5.52Z" fill="#dededc" stroke="#d4d4d2" stroke-width="0.5" stroke-linejoin="round"/><path d="M-0.80 -5.52V-22.650569351466643M0.80 -5.52V-22.650569351466643" stroke="#ececea" stroke-width="0.6"/><path d="M-2.4 -22.550569351466642H2.4" stroke="#f1f1f0" stroke-width="1.2"/><path d="M0 0L-1.08 -2.48H1.08Z" fill="#c9c9c7"/></g><g transform="translate(8 23.6) rotate(27.6)"><path d="M0 0L-2.4 -5.52V-24.60081299469593H2.4V-5.52Z" fill="#dededc" stroke="#d4d4d2" stroke-width="0.5" stroke-linejoin="round"/><path d="M-0.80 -5.52V-23.10081299469593M0.80 -5.52V-23.10081299469593" stroke="#ececea" stroke-width="0.6"/><path d="M-2.4 -23.000812994695927H2.4" stroke="#f1f1f0" stroke-width="1.2"/><path d="M0 0L-1.08 -2.48H1.08Z" fill="#c9c9c7"/></g></svg>
<svg class="ic" style="left:268px;top:59px" width="24" height="24" viewBox="0 0 24 24"><g transform="translate(5 23.4) rotate(31.3)"><path d="M0 0L-2.5 -5.75V-26.20534296665472H2.5V-5.75Z" fill="#dededc" stroke="#d4d4d2" stroke-width="0.5" stroke-linejoin="round"/><path d="M-0.83 -5.75V-24.70534296665472M0.83 -5.75V-24.70534296665472" stroke="#ececea" stroke-width="0.6"/><path d="M-2.5 -24.605342966654717H2.5" stroke="#f1f1f0" stroke-width="1.2"/><path d="M0 0L-1.12 -2.59H1.12Z" fill="#c9c9c7"/></g></svg>
<svg class="ic" style="left:301px;top:59px" width="24" height="24" viewBox="0 0 24 24"><rect x="2" y="1.2" width="19.5" height="19.8" rx="2" fill="#d4d4d2"/><rect x="5.8" y="2.8" width="11.5" height="7" fill="#e9e9e9"/><path d="M7 4.5H16M7 6.5H16M7 8.5H16" stroke="#d0d0d0" stroke-width="0.8"/><rect x="6.5" y="14" width="10.5" height="6" fill="#e9e9e9"/><g transform="translate(14.5 23) rotate(31.3)"><path d="M0 0L-1.7 -3.9099999999999997V-16.3783393541592H1.7V-3.9099999999999997Z" fill="#dededc" stroke="#d4d4d2" stroke-width="0.5" stroke-linejoin="round"/><path d="M-0.57 -3.9099999999999997V-14.878339354159198M0.57 -3.9099999999999997V-14.878339354159198" stroke="#ececea" stroke-width="0.6"/><path d="M-1.7 -14.778339354159199H1.7" stroke="#f1f1f0" stroke-width="1.2"/><path d="M0 0L-0.77 -1.76H0.77Z" fill="#c9c9c7"/></g></svg>
<svg class="ic" style="left:335px;top:59px" width="24" height="24" viewBox="0 0 24 24"><path d="M6 3.6l2.8 -2.8l2.8 2.8l-2.8 2.8z" fill="#d4d4d2" stroke="#c8c8c6" stroke-width="0.5"/><path d="M15 5.5l2.8 -2.8l2.8 2.8l-2.8 2.8z" fill="#d4d4d2" stroke="#c8c8c6" stroke-width="0.5"/><path d="M0.5 11.5l2.8 -2.8l2.8 2.8l-2.8 2.8z" fill="#d4d4d2" stroke="#c8c8c6" stroke-width="0.5"/><rect x="12.6" y="13" width="10.6" height="10.6" rx="1.6" fill="#d0d0ce"/><path d="M14.08 18.30L21.72 18.30M15.20 15.60L20.60 21.00M17.90 14.48L17.90 22.12M20.60 15.60L15.20 21.00" stroke="#fff" stroke-width="1.15" fill="none"/><circle cx="17.9" cy="18.3" r="1.06" fill="#d0d0ce"/></svg>
<svg class="ic" style="left:369px;top:59px" width="24" height="24" viewBox="0 0 24 24"><rect x="4.3" y="2.8" width="5.2" height="5.2" fill="#f0f0f0" stroke="#c4c4c2" stroke-width="1"/><circle cx="6.9" cy="5.4" r="1.3" fill="#c4c4c2"/><path d="M9.5 5.4H18.5" stroke="#d4d4d2" stroke-width="1.2" stroke-dasharray="1.4 0.8"/><path d="M6.5 8L2 20.5" stroke="#c4c4c2" stroke-width="0.8"/><path d="M9 20L19.5 9.5M9.5 10.5L19.5 20.5" stroke="#d4d4d2" stroke-width="3"/></svg>
<svg class="ic" style="left:413px;top:59px" width="24" height="24" viewBox="0 0 24 24"><rect x="2.3" y="2.2" width="19.4" height="5" fill="#dddcda"/><rect x="2.3" y="9.6" width="19.4" height="5" fill="#dddcda"/><rect x="2.3" y="17" width="19.4" height="5" fill="#dddcda"/><g transform="translate(8.5 23) rotate(26.6)"><path d="M0 0L-1.8 -4.14V-24.596747752497688H1.8V-4.14Z" fill="#dededc" stroke="#d4d4d2" stroke-width="0.5" stroke-linejoin="round"/><path d="M-0.60 -4.14V-23.096747752497688M0.60 -4.14V-23.096747752497688" stroke="#ececea" stroke-width="0.6"/><path d="M-1.8 -22.996747752497686H1.8" stroke="#f1f1f0" stroke-width="1.2"/><path d="M0 0L-0.81 -1.86H0.81Z" fill="#c9c9c7"/></g></svg>
<svg class="ic" style="left:445px;top:59px" width="24" height="24" viewBox="0 0 24 24"><rect x="3" y="2.2" width="13.5" height="13" fill="#e4e4e3" stroke="#d4d4d2" stroke-width="1"/><path d="M3 5.5H20.5M9.5 2.2V8" stroke="#c4c4c2" stroke-width="1.2"/><path d="M6.3 8.3H20.7L19.7 22.8H7.3Z" fill="#d9d8d6" stroke="#c4c4c2" stroke-width="0.8"/><path d="M10 11V20.5M13.5 11V20.5M17 11V20.5" stroke="#f1f1f1" stroke-width="1.3"/></svg>
<svg class="ic" style="left:478px;top:59px" width="24" height="24" viewBox="0 0 24 24"><path d="M2.5 5L17 16.5M2 11.5L17 9" fill="none" stroke="#d4d4d2" stroke-width="1.6"/><ellipse cx="19.2" cy="8" rx="3.6" ry="2.3" transform="rotate(-38 19.2 8)" fill="none" stroke="#c4c4c2" stroke-width="1.4"/><ellipse cx="19.2" cy="17.5" rx="3.6" ry="2.3" transform="rotate(50 19.2 17.5)" fill="none" stroke="#c4c4c2" stroke-width="1.4"/></svg>
<svg class="ic" style="left:511px;top:59px" width="24" height="24" viewBox="0 0 24 24"><path d="M9.5 2.5H15.5L19 6V16.5H9.5Z" fill="#f5f5f5" stroke="#e0e0df" stroke-width="0.9"/><path d="M5 6.5H11.5L15 10V21.5H5Z" fill="#f7f7f7" stroke="#c4c4c2" stroke-width="1"/><path d="M11.5 6.5V10H15" fill="none" stroke="#c4c4c2" stroke-width="0.9"/><path d="M7 12.5H13M7 14.8H11M7 17H13M7 19.2H13" stroke="#d4d4d2" stroke-width="0.8"/></svg>
<svg class="ic" style="left:545px;top:59px" width="24" height="24" viewBox="0 0 24 24"><rect x="4.6" y="2.6" width="15" height="19" fill="#ececeb" stroke="#c4c4c2" stroke-width="1"/><rect x="8" y="1.3" width="8.2" height="3.6" rx="0.8" fill="#e4e4e3" stroke="#d4d4d2" stroke-width="0.7"/><path d="M7.2 6H14L17.2 9.2V19.4H7.2Z" fill="#f8f8f8" stroke="#c4c4c2" stroke-width="0.9"/><path d="M9 11H15M9 13.2H13M9 15.4H15M9 17.6H15" stroke="#d4d4d2" stroke-width="0.8"/></svg>
<svg class="ic" style="left:578px;top:59px" width="24" height="24" viewBox="0 0 24 24"><path d="M3 10L9.5 3.2V7.2Q18.5 7.5 18.8 14.5Q18.8 19.5 13.2 20.5Q11.5 19 12 17Q15.2 16.2 14.8 13.8Q14 12.3 9.5 12.5V16.8Z" fill="#dbdbd9" stroke="#d0d0ce" stroke-width="0.5"/></svg>
<svg class="ic" style="left:611px;top:59px" width="24" height="24" viewBox="0 0 24 24"><path d="M21 10L14.5 3.2V7.2Q5.5 7.5 5.2 14.5Q5.2 19.5 10.8 20.5Q12.5 19 12 17Q8.8 16.2 9.2 13.8Q10 12.3 14.5 12.5V16.8Z" fill="#dbdbd9" stroke="#d0d0ce" stroke-width="0.5"/></svg>
<svg class="ic" style="left:659px;top:59px" width="24" height="24" viewBox="0 0 24 24"><path d="M1 9.5L5.6 4H22.2V15H5.6Z" fill="#dcdcd9" stroke="#d2d2cf" stroke-width="1" stroke-linejoin="miter"/><text x="5.6" y="12.4" font-family="DejaVu Sans,Liberation Sans,sans-serif" font-weight="bold" font-size="9.6" fill="#c2c2c0" stroke="#c2c2c0" stroke-width="0.35" textLength="14.6" lengthAdjust="spacingAndGlyphs">abc</text></svg>
<svg class="ic" style="left:693px;top:59px" width="24" height="24" viewBox="0 0 24 24"><circle cx="9" cy="9" r="7" fill="#d4d4d2"/><path d="M9 9V2M9 9L15 12.5" stroke="#e6e6e4" stroke-width="0.9"/><rect x="11" y="15" width="3.6" height="8" fill="#dcdcda"/><rect x="14.8" y="9.5" width="3.8" height="13.5" fill="#cfcfcd"/><rect x="18.8" y="16.5" width="3.6" height="6.5" fill="#c9c9c7"/></svg>
<svg class="ic" style="left:733px;top:59px" width="24" height="24" viewBox="0 0 24 24"><path d="M0.4 9.5L5.0 4H20.6V15H5.0Z" fill="#dfeaf5" stroke="#3a9ad9" stroke-width="1.1" stroke-linejoin="miter"/><text x="4.2" y="12.4" font-family="DejaVu Sans,Liberation Sans,sans-serif" font-weight="bold" font-size="9.6" fill="#2b2b2b" stroke="#2b2b2b" stroke-width="0.35" textLength="14.6" lengthAdjust="spacingAndGlyphs">abc</text><path d="M17.5 8L18.8 14" stroke="#e9e9e9" stroke-width="1.6"/><circle cx="18.5" cy="18" r="4.6" fill="#a5281f" stroke="#8c1d16" stroke-width="0.5"/></svg>
<svg class="ic" style="left:765px;top:59px" width="24" height="24" viewBox="0 0 24 24"><path d="M1 9.5L5.6 4H22.2V15H5.6Z" fill="#fff" stroke="#f01414" stroke-width="1.3" stroke-linejoin="miter"/><text x="5.6" y="12.4" font-family="DejaVu Sans,Liberation Sans,sans-serif" font-weight="bold" font-size="9.6" fill="#f01414" stroke="#f01414" stroke-width="0.35" textLength="14.6" lengthAdjust="spacingAndGlyphs">abc</text></svg>
<svg class="ic" style="left:806px;top:59px" width="24" height="24" viewBox="0 0 24 24"><path d="M1 9.25L5.6 4H22.2V14.5H5.6Z" fill="#dededb" stroke="#d2d2cf" stroke-width="1" stroke-linejoin="miter"/><text x="5" y="11.9" font-family="DejaVu Sans,Liberation Sans,sans-serif" font-weight="bold" font-size="9.6" fill="#c0c0be" stroke="#c0c0be" stroke-width="0.35" textLength="14.6" lengthAdjust="spacingAndGlyphs">abc</text><path d="M17.5 8L18.5 14" stroke="#f0f0f0" stroke-width="1.4"/><circle cx="18.6" cy="18.5" r="4.2" fill="#cbcbc9"/></svg>
<svg class="ic" style="left:839px;top:59px" width="24" height="24" viewBox="0 0 24 24"><path d="M1 9.25L5.6 4H22.2V14.5H5.6Z" fill="#dededb" stroke="#d2d2cf" stroke-width="1" stroke-linejoin="miter"/><text x="5" y="11.9" font-family="DejaVu Sans,Liberation Sans,sans-serif" font-weight="bold" font-size="9.6" fill="#c0c0be" stroke="#c0c0be" stroke-width="0.35" textLength="14.6" lengthAdjust="spacingAndGlyphs">abc</text><path d="M8.5 19.5Q15.5 13.5 22.5 19.5Q15.5 25 8.5 19.5Z" fill="#f4f4f4" stroke="#cbcbc9" stroke-width="0.9"/><circle cx="15.5" cy="19.3" r="1.9" fill="#b9b9b7"/></svg>
<svg class="ic" style="left:872px;top:59px" width="24" height="24" viewBox="0 0 24 24"><path d="M1 9.25L5.6 4H22.2V14.5H5.6Z" fill="#dededb" stroke="#d2d2cf" stroke-width="1" stroke-linejoin="miter"/><text x="5" y="11.9" font-family="DejaVu Sans,Liberation Sans,sans-serif" font-weight="bold" font-size="9.6" fill="#c0c0be" stroke="#c0c0be" stroke-width="0.35" textLength="14.6" lengthAdjust="spacingAndGlyphs">abc</text><rect x="13.5" y="13.5" width="10" height="10" rx="1.6" fill="#cbcbc9"/><path d="M15 17.2H18.5V15L22.3 18.5L18.5 22V19.8H15Z" fill="#fafafa"/></svg>
<svg class="ic" style="left:905px;top:59px" width="24" height="24" viewBox="0 0 24 24"><path d="M1 9.25L5.6 4H22.2V14.5H5.6Z" fill="#dededb" stroke="#d2d2cf" stroke-width="1" stroke-linejoin="miter"/><text x="5" y="11.9" font-family="DejaVu Sans,Liberation Sans,sans-serif" font-weight="bold" font-size="9.6" fill="#c0c0be" stroke="#c0c0be" stroke-width="0.35" textLength="14.6" lengthAdjust="spacingAndGlyphs">abc</text><rect x="13.5" y="13.5" width="10" height="10" rx="1.6" fill="#cbcbc9"/><path d="M21.3 19A2.8 2.8 0 1 1 18.5 15.8" fill="none" stroke="#fafafa" stroke-width="1.5"/><path d="M17.5 14L20.3 16L17.6 18Z" fill="#fafafa"/></svg>
<svg class="ic" style="left:938px;top:59px" width="24" height="24" viewBox="0 0 24 24"><path d="M1 9.25L5.6 4H22.2V14.5H5.6Z" fill="#dededb" stroke="#d2d2cf" stroke-width="1" stroke-linejoin="miter"/><text x="5" y="11.9" font-family="DejaVu Sans,Liberation Sans,sans-serif" font-weight="bold" font-size="9.6" fill="#c0c0be" stroke="#c0c0be" stroke-width="0.35" textLength="14.6" lengthAdjust="spacingAndGlyphs">abc</text><rect x="13.5" y="13.5" width="10" height="10" rx="1.6" fill="#cbcbc9"/><path d="M15.5 21.5L21.5 15.5" stroke="#fafafa" stroke-width="2.4"/></svg>
<svg class="ic" style="left:1021px;top:59px" width="24" height="24" viewBox="0 0 24 24"><rect x="2" y="1.2" width="20" height="20.6" rx="1" fill="#dadad9" stroke="#c9c9c8" stroke-width="0.6"/><rect x="2.3" y="1.5" width="4.4" height="20" fill="#bcbcbb"/><text x="10.2" y="16.8" font-family="DejaVu Sans,Liberation Sans,sans-serif" font-size="13.5" fill="#ececec">?</text></svg>
<svg class="ic" style="left:255.5px;top:78.5px" width="5" height="3" viewBox="0 0 5 3"><path d="M0 0H5L2.5 3Z" fill="#b9babb"/></svg>
<svg class="ic" style="left:398px;top:69px" width="8" height="4" viewBox="0 0 8 4"><path d="M0 0H8L4 4Z" fill="#a3a4a5"/></svg>
<div class="t" style="left:2px;top:93px;">Layers</div>
<svg class="ic" style="left:251px;top:95px" width="12" height="12" viewBox="0 0 12 12"><rect x="0.5" y="0.5" width="10" height="10" rx="2" fill="#f4f4f5" stroke="#686868" stroke-width="1"/><path d="M4.7 4V3.4Q4.7 2.6 5.5 2.6H7.6Q8.4 2.6 8.4 3.4V5.5Q8.4 6.3 7.6 6.3H7" fill="none" stroke="#5f5f5f" stroke-width="0.9"/><rect x="2.6" y="4.4" width="4" height="4" rx="0.9" fill="#fff" stroke="#5f5f5f" stroke-width="0.9"/></svg>
<svg class="ic" style="left:265px;top:95px" width="12" height="12" viewBox="0 0 12 12"><rect x="0.5" y="0.5" width="10" height="10" rx="2" fill="#f4f4f5" stroke="#686868" stroke-width="1"/><path d="M3.1 3.1L7.9 7.9M7.9 3.1L3.1 7.9" stroke="#5a5a5a" stroke-width="1.7"/></svg>
<div class="pressed" style="left:2px;top:114px;width:24px;height:23px;"></div>
<svg class="ic" style="left:6px;top:117px" width="16" height="16" viewBox="0 0 16 16"><path d="M9 6.2L14.6 1.2" stroke="#d9892b" stroke-width="2.2" stroke-linecap="round"/><path d="M1.5 8.2L6 3.5L11.5 8.5L8 13.2Z" fill="#e8b13b"/><path d="M2.8 5L6 2.6L8.2 4.2L5 7Z" fill="#f3d338"/><path d="M1.6 6.5L5.2 5L7.2 7.2L3.2 8.6Z" fill="#5a97d6"/><path d="M0.6 9L4 8L9.6 12.6L8.2 14.2Z" fill="#e33a2c"/></svg>
<svg class="ic" style="left:30.5px;top:117px" width="16" height="16" viewBox="0 0 16 16"><path d="M0.8 7.5V14.5H7" fill="none" stroke="#5c5c5c" stroke-width="1"/><rect x="2.8" y="4.5" width="8.6" height="8" fill="#f4f4f4" stroke="#5c5c5c" stroke-width="1"/><rect x="5" y="2.5" width="8.4" height="8.4" fill="#f4f4f4" stroke="#5c5c5c" stroke-width="1"/><path d="M6.3 5.5V9.5Q6.3 10.8 7.6 10.8Q8.9 10.8 8.9 9.5V1.8Q8.9 0.6 7.9 0.6Q7 0.6 7 1.8V8.5" fill="none" stroke="#2e5a8c" stroke-width="0.9"/><rect x="9.5" y="10" width="6.2" height="6" rx="0.8" fill="#5fa457"/><circle cx="12.6" cy="13" r="1.9" fill="#e9f5e6"/></svg>
<svg class="ic" style="left:56px;top:117px" width="16" height="16" viewBox="0 0 16 16"><path d="M0.6 7.6Q3.5 3 8 3.2Q12.5 3.4 15.2 8.6Q11.5 13 7.5 12.6Q3.5 12.2 0.6 7.6Z" fill="#f5f5f5" stroke="#8d8d8d" stroke-width="0.9"/><path d="M1.5 5Q5 1.5 10 2.2Q12.5 2.8 14 5" fill="none" stroke="#9a9a9a" stroke-width="0.8"/><circle cx="8" cy="7.6" r="3.6" fill="#5d95d4" stroke="#4178b5" stroke-width="0.5"/><circle cx="8.3" cy="7.3" r="1.6" fill="#15181c"/><circle cx="8.9" cy="6.6" r="0.5" fill="#fff"/><path d="M12 13.2H17L14.5 15.8Z" fill="#6e6e6e"/></svg>
<svg class="ic" style="left:81px;top:117px" width="16" height="16" viewBox="0 0 16 16"><path d="M0.8 1.2H15.2V3L9.8 9V15.6L6.6 14.2V9L0.8 3Z" fill="#5d93cf" stroke="#4a7fbb" stroke-width="0.6" stroke-linejoin="round"/><path d="M1.2 0.9H14.8V2.9H1.2Z" fill="#f5d22c"/></svg>
<svg class="ic" style="left:107px;top:117px" width="16" height="16" viewBox="0 0 16 16"><text x="1.2" y="10.8" font-family="Liberation Serif,DejaVu Serif,serif" font-size="15.5" fill="#c4c5c5">ε</text><path d="M7.8 8.8H15.2V10.2L13.6 12V15.8H9.4V12L7.8 10.2Z" fill="#d9d9d9"/><path d="M11.5 10V15.5" stroke="#eeeeee" stroke-width="1.3"/></svg>
<svg class="ic" style="left:144px;top:117px" width="16" height="16" viewBox="0 0 16 16"><path d="M0.6 2.4H14.4M2 2.4V14M2 6.8H5M2 12.8H5" fill="none" stroke="#a7a7a7" stroke-width="0.9"/><rect x="4.4" y="4.8" width="3.4" height="3.6" fill="#f5c518" stroke="#e8742a" stroke-width="0.8"/><rect x="4.4" y="10.8" width="3.4" height="3.6" fill="#f5c518" stroke="#e8742a" stroke-width="0.8"/><path d="M8.8 1.2H12.2V9.4H15.2L10.5 14.8L5.8 9.4H8.8Z" fill="#5d93cf" stroke="#2e5a8c" stroke-width="0.8" stroke-linejoin="round"/></svg>
<svg class="ic" style="left:169px;top:117px" width="16" height="16" viewBox="0 0 16 16"><path d="M0.6 2.8H14.4M2 2.8V14.4M2 7.2H5M2 13.2H5" fill="none" stroke="#a7a7a7" stroke-width="0.9"/><rect x="4.4" y="5.2" width="3.4" height="3.6" fill="#f5c518" stroke="#e8742a" stroke-width="0.8"/><rect x="4.4" y="11.2" width="3.4" height="3.6" fill="#f5c518" stroke="#e8742a" stroke-width="0.8"/><path d="M8.8 14.4H12.2V6.4H15.2L10.5 0.8L5.8 6.4H8.8Z" fill="#5d93cf" stroke="#2e5a8c" stroke-width="0.8" stroke-linejoin="round"/></svg>
<svg class="ic" style="left:193px;top:117px" width="16" height="16" viewBox="0 0 16 16"><rect x="1.5" y="1.6" width="11.4" height="11.6" fill="#f1f1f2" stroke="#7b7b7b" stroke-width="1"/><path d="M4 2V13M6.4 2V13M8.8 2V13M11 2V13" stroke="#e5e5e6" stroke-width="0.7"/><rect x="9.4" y="12" width="6.4" height="3.6" rx="1.2" fill="#ef3b2c"/><path d="M10.6 13.8H14.6" stroke="#fff" stroke-width="1.1"/></svg>
<svg class="ic" style="left:128px;top:123px" width="8" height="4" viewBox="0 0 8 4"><path d="M0 0H8L4 4Z" fill="#a6a7a8"/></svg>
<div class="view" style="left:0px;top:141px;width:278px;height:830px;border-left:none"></div>
<div style="left:273px;top:143px;width:3px;height:17px;background:#e4e5e6"></div>
<svg class="ic" style="left:7.5px;top:147.5px" width="4" height="8" viewBox="0 0 4 8"><path d="M0 0V8L4 4Z" fill="#6e7071"/></svg>
<div class="chk" style="left:23px;top:144px;width:14px;height:14px;"></div>
<svg class="ic" style="left:25px;top:146px" width="10" height="10" viewBox="0 0 10 10"><path d="M1.2 5.2L3.8 8.6L8.6 0.8" fill="none" stroke="#232627" stroke-width="1.7"/></svg>
<svg class="ic" style="left:44px;top:143.5px" width="16" height="16" viewBox="0 0 16 16"><path d="M0.5 1.5H14.5V10.5H8.5V15.5H0.5Z" fill="#b9d3ee" stroke="#2e5a8c" stroke-width="1" stroke-linejoin="miter"/><path d="M4.5 1.5V15.5M0.5 10.5H8.5M4.5 10.5L14 1.8" fill="none" stroke="#2e5a8c" stroke-width="0.9"/><path d="M5.2 1.9H13L5.2 9.2Z" fill="#e3edf8"/><path d="M4.5 12.9H8.5" stroke="#2e5a8c" stroke-width="0.6"/></svg>
<div class="t" style="left:66px;top:144px;font-weight:bold;text-decoration:underline;text-underline-offset:3px;text-decoration-thickness:1px;text-decoration-skip-ink:none;">trap_steady_05_3D</div>
<div style="left:284px;top:91px;width:1084px;height:880px;background:#fff;border:1px solid #b3b4b5;border-top-color:#b3b4b5"></div>
<div style="left:285px;top:392px;width:1081px;height:320px;background:linear-gradient(to bottom,rgb(61,144,183) 0px,rgb(64,146,182) 1px,rgb(67,148,182) 2px,rgb(70,150,181) 3px,rgb(73,152,181) 4px,rgb(76,154,180) 5px,rgb(79,156,180) 6px,rgb(82,158,179) 7px,rgb(84,160,179) 8px,rgb(87,162,178) 9px,rgb(90,164,178) 10px,rgb(93,166,177) 11px,rgb(96,168,177) 12px,rgb(99,171,176) 13px,rgb(102,173,176) 14px,rgb(105,175,175) 15px,rgb(108,177,175) 16px,rgb(111,179,174) 17px,rgb(114,181,174) 18px,rgb(117,183,173) 19px,rgb(120,185,173) 20px,rgb(124,188,172) 21px,rgb(129,191,171) 22px,rgb(133,194,170) 23px,rgb(138,198,170) 24px,rgb(142,201,169) 25px,rgb(147,204,168) 26px,rgb(151,207,167) 27px,rgb(156,210,167) 28px,rgb(160,213,166) 29px,rgb(165,217,165) 30px,rgb(169,220,164) 31px,rgb(173,222,165) 32px,rgb(176,223,165) 33px,rgb(179,224,166) 34px,rgb(182,225,167) 35px,rgb(184,226,168) 36px,rgb(187,228,169) 37px,rgb(190,229,170) 38px,rgb(193,230,171) 39px,rgb(196,231,172) 40px,rgb(200,233,173) 41px,rgb(203,234,174) 42px,rgb(207,236,176) 43px,rgb(210,237,177) 44px,rgb(214,238,178) 45px,rgb(218,240,179) 46px,rgb(221,241,180) 47px,rgb(225,243,181) 48px,rgb(228,244,182) 49px,rgb(232,246,184) 50px,rgb(235,247,185) 51px,rgb(239,249,186) 52px,rgb(243,250,187) 53px,rgb(246,251,188) 54px,rgb(250,253,189) 55px,rgb(253,254,190) 56px,rgb(255,253,189) 57px,rgb(255,250,185) 58px,rgb(255,246,181) 59px,rgb(255,243,177) 60px,rgb(255,239,173) 61px,rgb(255,236,169) 62px,rgb(254,233,165) 63px,rgb(254,229,161) 64px,rgb(254,226,157) 65px,rgb(254,222,153) 66px,rgb(254,219,149) 67px,rgb(254,215,145) 68px,rgb(254,212,141) 69px,rgb(254,208,137) 70px,rgb(254,205,133) 71px,rgb(254,202,129) 72px,rgb(254,198,125) 73px,rgb(254,195,121) 74px,rgb(253,191,117) 75px,rgb(253,188,113) 76px,rgb(253,184,109) 77px,rgb(253,181,105) 78px,rgb(253,177,101) 79px,rgb(253,174,97) 80px,rgb(253,172,96) 81px,rgb(252,171,95) 82px,rgb(252,169,95) 83px,rgb(251,167,94) 84px,rgb(251,165,93) 85px,rgb(250,164,92) 86px,rgb(250,162,91) 87px,rgb(250,160,91) 88px,rgb(249,159,90) 89px,rgb(249,157,89) 90px,rgb(248,155,88) 91px,rgb(248,153,87) 92px,rgb(247,152,87) 93px,rgb(247,150,86) 94px,rgb(246,148,85) 95px,rgb(246,147,84) 96px,rgb(246,145,84) 97px,rgb(245,143,83) 98px,rgb(245,141,82) 99px,rgb(244,140,81) 100px,rgb(244,138,80) 101px,rgb(243,136,80) 102px,rgb(243,135,79) 103px,rgb(243,133,78) 104px,rgb(242,131,77) 105px,rgb(242,129,76) 106px,rgb(241,128,76) 107px,rgb(241,126,75) 108px,rgb(240,124,74) 109px,rgb(240,123,73) 110px,rgb(239,121,72) 111px,rgb(239,119,72) 112px,rgb(239,117,71) 113px,rgb(238,116,70) 114px,rgb(238,114,69) 115px,rgb(237,112,68) 116px,rgb(237,111,68) 117px,rgb(236,109,67) 118px,rgb(236,107,66) 119px,rgb(236,105,65) 120px,rgb(232,94,60) 121px,rgb(232,94,60) 122px,rgb(232,94,60) 123px,rgb(232,94,60) 124px,rgb(232,94,60) 125px,rgb(232,94,60) 126px,rgb(232,94,60) 127px,rgb(232,94,60) 128px,rgb(232,94,60) 129px,rgb(232,94,60) 130px,rgb(232,94,60) 131px,rgb(232,94,60) 132px,rgb(232,94,60) 133px,rgb(232,94,60) 134px,rgb(232,94,60) 135px,rgb(232,94,60) 136px,rgb(232,94,60) 137px,rgb(232,94,60) 138px,rgb(232,94,60) 139px,rgb(232,94,60) 140px,rgb(232,94,60) 141px,rgb(232,94,60) 142px,rgb(232,94,60) 143px,rgb(232,94,60) 144px,rgb(232,94,60) 145px,rgb(232,94,60) 146px,rgb(232,94,60) 147px,rgb(232,94,60) 148px,rgb(232,94,60) 149px,rgb(232,94,60) 150px,rgb(232,94,60) 151px,rgb(232,94,60) 152px,rgb(232,94,60) 153px,rgb(232,94,60) 154px,rgb(232,94,60) 155px,rgb(232,94,60) 156px,rgb(232,94,60) 157px,rgb(232,94,60) 158px,rgb(232,94,60) 159px,rgb(232,94,60) 160px,rgb(232,94,60) 161px,rgb(232,94,60) 162px,rgb(232,94,60) 163px,rgb(232,94,60) 164px,rgb(232,94,60) 165px,rgb(232,94,60) 166px,rgb(232,94,60) 167px,rgb(232,94,60) 168px,rgb(232,94,60) 169px,rgb(232,94,60) 170px,rgb(232,94,60) 171px,rgb(232,94,60) 172px,rgb(232,94,60) 173px,rgb(232,94,60) 174px,rgb(232,94,60) 175px,rgb(232,94,60) 176px,rgb(232,94,60) 177px,rgb(232,94,60) 178px,rgb(232,94,60) 179px,rgb(232,94,60) 180px,rgb(232,94,60) 181px,rgb(232,94,60) 182px,rgb(232,94,60) 183px,rgb(232,94,60) 184px,rgb(232,94,60) 185px,rgb(232,94,60) 186px,rgb(232,94,60) 187px,rgb(232,94,60) 188px,rgb(232,94,60) 189px,rgb(232,94,60) 190px,rgb(232,94,60) 191px,rgb(232,94,60) 192px,rgb(232,94,60) 193px,rgb(232,94,60) 194px,rgb(232,94,60) 195px,rgb(232,94,60) 196px,rgb(232,94,60) 197px,rgb(232,94,60) 198px,rgb(232,94,60) 199px,rgb(236,107,66) 200px,rgb(236,109,67) 201px,rgb(237,111,68) 202px,rgb(237,112,68) 203px,rgb(238,114,69) 204px,rgb(238,116,70) 205px,rgb(239,117,71) 206px,rgb(239,119,72) 207px,rgb(239,121,72) 208px,rgb(240,123,73) 209px,rgb(240,124,74) 210px,rgb(241,126,75) 211px,rgb(241,128,76) 212px,rgb(242,129,76) 213px,rgb(242,131,77) 214px,rgb(243,133,78) 215px,rgb(243,135,79) 216px,rgb(243,136,80) 217px,rgb(244,138,80) 218px,rgb(244,140,81) 219px,rgb(245,141,82) 220px,rgb(245,143,83) 221px,rgb(246,145,84) 222px,rgb(246,147,84) 223px,rgb(246,148,85) 224px,rgb(247,150,86) 225px,rgb(247,152,87) 226px,rgb(248,153,87) 227px,rgb(248,155,88) 228px,rgb(249,157,89) 229px,rgb(249,159,90) 230px,rgb(250,160,91) 231px,rgb(250,162,91) 232px,rgb(250,164,92) 233px,rgb(251,165,93) 234px,rgb(251,167,94) 235px,rgb(252,169,95) 236px,rgb(252,171,95) 237px,rgb(253,172,96) 238px,rgb(253,174,97) 239px,rgb(253,178,101) 240px,rgb(253,181,105) 241px,rgb(253,185,110) 242px,rgb(253,188,114) 243px,rgb(253,192,118) 244px,rgb(254,196,122) 245px,rgb(254,199,126) 246px,rgb(254,203,130) 247px,rgb(254,206,135) 248px,rgb(254,210,139) 249px,rgb(254,214,143) 250px,rgb(254,217,147) 251px,rgb(254,221,151) 252px,rgb(254,224,156) 253px,rgb(254,228,160) 254px,rgb(254,232,164) 255px,rgb(255,235,168) 256px,rgb(255,239,172) 257px,rgb(255,242,176) 258px,rgb(255,246,181) 259px,rgb(255,250,185) 260px,rgb(255,253,189) 261px,rgb(253,254,190) 262px,rgb(249,253,189) 263px,rgb(246,251,188) 264px,rgb(242,250,187) 265px,rgb(238,248,186) 266px,rgb(234,247,184) 267px,rgb(231,245,183) 268px,rgb(227,244,182) 269px,rgb(223,242,181) 270px,rgb(219,241,180) 271px,rgb(216,239,178) 272px,rgb(212,238,177) 273px,rgb(208,236,176) 274px,rgb(204,235,175) 275px,rgb(201,233,174) 276px,rgb(197,232,172) 277px,rgb(193,230,171) 278px,rgb(189,228,170) 279px,rgb(187,227,169) 280px,rgb(184,226,168) 281px,rgb(181,225,167) 282px,rgb(178,224,166) 283px,rgb(175,223,165) 284px,rgb(172,222,164) 285px,rgb(169,219,164) 286px,rgb(164,216,165) 287px,rgb(160,213,166) 288px,rgb(156,210,167) 289px,rgb(151,207,167) 290px,rgb(147,204,168) 291px,rgb(143,201,169) 292px,rgb(138,198,170) 293px,rgb(134,195,170) 294px,rgb(130,192,171) 295px,rgb(125,189,172) 296px,rgb(121,186,173) 297px,rgb(116,183,173) 298px,rgb(112,180,174) 299px,rgb(109,178,175) 300px,rgb(107,176,175) 301px,rgb(104,174,176) 302px,rgb(101,172,176) 303px,rgb(98,170,177) 304px,rgb(95,168,177) 305px,rgb(92,166,177) 306px,rgb(90,164,178) 307px,rgb(87,162,178) 308px,rgb(84,160,179) 309px,rgb(81,158,179) 310px,rgb(78,156,180) 311px,rgb(76,154,180) 312px,rgb(73,152,181) 313px,rgb(70,150,181) 314px,rgb(67,148,182) 315px,rgb(64,146,182) 316px,rgb(62,144,183) 317px,rgb(59,142,183) 318px,rgb(56,140,184) 319px,rgb(53,138,184) 320px)"></div>
<div style="left:285px;top:392px;width:1081px;height:320px;background:linear-gradient(to bottom,rgb(66,147,182) 0px,rgb(69,150,181) 1px,rgb(73,152,181) 2px,rgb(76,154,180) 3px,rgb(80,157,180) 4px,rgb(83,159,179) 5px,rgb(87,162,178) 6px,rgb(90,164,178) 7px,rgb(94,167,177) 8px,rgb(97,169,177) 9px,rgb(101,172,176) 10px,rgb(104,174,176) 11px,rgb(108,176,175) 12px,rgb(111,179,174) 13px,rgb(114,181,174) 14px,rgb(118,184,173) 15px,rgb(121,186,173) 16px,rgb(125,189,172) 17px,rgb(128,191,171) 18px,rgb(132,193,171) 19px,rgb(135,196,170) 20px,rgb(140,199,169) 21px,rgb(145,203,168) 22px,rgb(151,207,168) 23px,rgb(156,210,167) 24px,rgb(161,214,166) 25px,rgb(166,217,165) 26px,rgb(171,221,164) 27px,rgb(174,222,165) 28px,rgb(178,224,166) 29px,rgb(181,225,167) 30px,rgb(184,226,168) 31px,rgb(188,228,169) 32px,rgb(191,229,170) 33px,rgb(195,231,172) 34px,rgb(198,232,173) 35px,rgb(201,233,174) 36px,rgb(205,235,175) 37px,rgb(208,236,176) 38px,rgb(211,237,177) 39px,rgb(215,239,178) 40px,rgb(218,240,179) 41px,rgb(222,242,180) 42px,rgb(225,243,181) 43px,rgb(229,244,183) 44px,rgb(232,246,184) 45px,rgb(236,247,185) 46px,rgb(239,249,186) 47px,rgb(243,250,187) 48px,rgb(246,252,188) 49px,rgb(250,253,189) 50px,rgb(253,254,191) 51px,rgb(255,253,189) 52px,rgb(255,250,185) 53px,rgb(255,246,181) 54px,rgb(255,243,177) 55px,rgb(255,239,173) 56px,rgb(255,236,169) 57px,rgb(254,233,165) 58px,rgb(254,229,161) 59px,rgb(254,226,157) 60px,rgb(254,222,153) 61px,rgb(254,219,149) 62px,rgb(254,216,145) 63px,rgb(254,212,141) 64px,rgb(254,209,137) 65px,rgb(254,205,133) 66px,rgb(254,202,130) 67px,rgb(254,199,126) 68px,rgb(254,195,122) 69px,rgb(253,192,118) 70px,rgb(253,188,114) 71px,rgb(253,185,110) 72px,rgb(253,182,106) 73px,rgb(253,178,102) 74px,rgb(253,175,98) 75px,rgb(252,169,95) 76px,rgb(250,163,92) 77px,rgb(249,157,89) 78px,rgb(247,150,86) 79px,rgb(245,144,83) 80px,rgb(245,142,82) 81px,rgb(244,141,82) 82px,rgb(244,139,81) 83px,rgb(244,137,80) 84px,rgb(243,135,79) 85px,rgb(243,133,78) 86px,rgb(242,132,77) 87px,rgb(242,130,77) 88px,rgb(241,128,76) 89px,rgb(241,126,75) 90px,rgb(240,125,74) 91px,rgb(240,123,73) 92px,rgb(239,121,72) 93px,rgb(239,119,72) 94px,rgb(239,117,71) 95px,rgb(238,116,70) 96px,rgb(238,114,69) 97px,rgb(237,112,68) 98px,rgb(237,110,67) 99px,rgb(236,108,67) 100px,rgb(236,107,66) 101px,rgb(235,105,65) 102px,rgb(235,103,64) 103px,rgb(234,101,63) 104px,rgb(234,100,62) 105px,rgb(234,98,62) 106px,rgb(233,96,61) 107px,rgb(233,94,60) 108px,rgb(232,92,59) 109px,rgb(232,91,58) 110px,rgb(231,89,58) 111px,rgb(231,87,57) 112px,rgb(230,85,56) 113px,rgb(230,83,55) 114px,rgb(229,82,54) 115px,rgb(229,80,53) 116px,rgb(229,78,53) 117px,rgb(228,76,52) 118px,rgb(228,74,51) 119px,rgb(227,73,50) 120px,rgb(222,52,40) 121px,rgb(222,52,40) 122px,rgb(222,52,40) 123px,rgb(222,52,40) 124px,rgb(222,52,40) 125px,rgb(222,52,40) 126px,rgb(222,52,40) 127px,rgb(222,52,40) 128px,rgb(222,52,40) 129px,rgb(222,52,40) 130px,rgb(222,52,40) 131px,rgb(222,52,40) 132px,rgb(222,52,40) 133px,rgb(222,52,40) 134px,rgb(222,52,40) 135px,rgb(222,52,40) 136px,rgb(222,52,40) 137px,rgb(222,52,40) 138px,rgb(222,52,40) 139px,rgb(222,52,40) 140px,rgb(222,52,40) 141px,rgb(222,52,40) 142px,rgb(222,52,40) 143px,rgb(222,52,40) 144px,rgb(222,52,40) 145px,rgb(222,52,40) 146px,rgb(222,52,40) 147px,rgb(222,52,40) 148px,rgb(222,52,40) 149px,rgb(222,52,40) 150px,rgb(222,52,40) 151px,rgb(222,52,40) 152px,rgb(222,52,40) 153px,rgb(222,52,40) 154px,rgb(222,52,40) 155px,rgb(222,52,40) 156px,rgb(222,52,40) 157px,rgb(222,52,40) 158px,rgb(222,52,40) 159px,rgb(222,52,40) 160px,rgb(222,52,40) 161px,rgb(222,52,40) 162px,rgb(222,52,40) 163px,rgb(222,52,40) 164px,rgb(222,52,40) 165px,rgb(222,52,40) 166px,rgb(222,52,40) 167px,rgb(222,52,40) 168px,rgb(222,52,40) 169px,rgb(222,52,40) 170px,rgb(222,52,40) 171px,rgb(222,52,40) 172px,rgb(222,52,40) 173px,rgb(222,52,40) 174px,rgb(222,52,40) 175px,rgb(222,52,40) 176px,rgb(222,52,40) 177px,rgb(222,52,40) 178px,rgb(222,52,40) 179px,rgb(222,52,40) 180px,rgb(222,52,40) 181px,rgb(222,52,40) 182px,rgb(222,52,40) 183px,rgb(222,52,40) 184px,rgb(222,52,40) 185px,rgb(222,52,40) 186px,rgb(222,52,40) 187px,rgb(222,52,40) 188px,rgb(222,52,40) 189px,rgb(222,52,40) 190px,rgb(222,52,40) 191px,rgb(222,52,40) 192px,rgb(222,52,40) 193px,rgb(222,52,40) 194px,rgb(222,52,40) 195px,rgb(222,52,40) 196px,rgb(222,52,40) 197px,rgb(222,52,40) 198px,rgb(222,52,40) 199px,rgb(228,74,51) 200px,rgb(228,76,52) 201px,rgb(229,78,53) 202px,rgb(229,80,53) 203px,rgb(229,82,54) 204px,rgb(230,83,55) 205px,rgb(230,85,56) 206px,rgb(231,87,57) 207px,rgb(231,89,58) 208px,rgb(232,91,58) 209px,rgb(232,92,59) 210px,rgb(233,94,60) 211px,rgb(233,96,61) 212px,rgb(234,98,62) 213px,rgb(234,99,62) 214px,rgb(234,101,63) 215px,rgb(235,103,64) 216px,rgb(235,105,65) 217px,rgb(236,107,66) 218px,rgb(236,108,67) 219px,rgb(237,110,67) 220px,rgb(237,112,68) 221px,rgb(238,114,69) 222px,rgb(238,116,70) 223px,rgb(239,117,71) 224px,rgb(239,119,72) 225px,rgb(239,121,72) 226px,rgb(240,123,73) 227px,rgb(240,125,74) 228px,rgb(241,126,75) 229px,rgb(241,128,76) 230px,rgb(242,130,77) 231px,rgb(242,132,77) 232px,rgb(243,133,78) 233px,rgb(243,135,79) 234px,rgb(244,137,80) 235px,rgb(244,139,81) 236px,rgb(244,141,82) 237px,rgb(245,142,82) 238px,rgb(245,144,83) 239px,rgb(247,151,86) 240px,rgb(249,157,89) 241px,rgb(250,164,92) 242px,rgb(252,170,95) 243px,rgb(253,176,99) 244px,rgb(253,179,103) 245px,rgb(253,183,107) 246px,rgb(253,186,111) 247px,rgb(253,190,115) 248px,rgb(253,193,120) 249px,rgb(254,197,124) 250px,rgb(254,201,128) 251px,rgb(254,204,132) 252px,rgb(254,208,136) 253px,rgb(254,211,140) 254px,rgb(254,215,144) 255px,rgb(254,218,149) 256px,rgb(254,222,153) 257px,rgb(254,226,157) 258px,rgb(254,229,161) 259px,rgb(254,233,165) 260px,rgb(255,236,169) 261px,rgb(255,240,173) 262px,rgb(255,243,177) 263px,rgb(255,247,182) 264px,rgb(255,250,186) 265px,rgb(255,254,190) 266px,rgb(252,254,190) 267px,rgb(249,252,189) 268px,rgb(245,251,188) 269px,rgb(241,249,187) 270px,rgb(238,248,185) 271px,rgb(234,246,184) 272px,rgb(230,245,183) 273px,rgb(226,243,182) 274px,rgb(223,242,181) 275px,rgb(219,240,179) 276px,rgb(215,239,178) 277px,rgb(212,237,177) 278px,rgb(208,236,176) 279px,rgb(205,235,175) 280px,rgb(201,233,174) 281px,rgb(198,232,173) 282px,rgb(195,231,172) 283px,rgb(192,229,171) 284px,rgb(188,228,170) 285px,rgb(185,227,169) 286px,rgb(182,225,167) 287px,rgb(178,224,166) 288px,rgb(175,223,165) 289px,rgb(172,221,164) 290px,rgb(167,218,165) 291px,rgb(162,215,165) 292px,rgb(157,211,166) 293px,rgb(152,208,167) 294px,rgb(147,204,168) 295px,rgb(142,201,169) 296px,rgb(137,197,170) 297px,rgb(132,194,171) 298px,rgb(127,190,171) 299px,rgb(124,188,172) 300px,rgb(121,186,173) 301px,rgb(118,183,173) 302px,rgb(114,181,174) 303px,rgb(111,179,174) 304px,rgb(108,177,175) 305px,rgb(104,174,175) 306px,rgb(101,172,176) 307px,rgb(98,170,177) 308px,rgb(95,167,177) 309px,rgb(91,165,178) 310px,rgb(88,163,178) 311px,rgb(85,160,179) 312px,rgb(81,158,179) 313px,rgb(78,156,180) 314px,rgb(75,153,181) 315px,rgb(72,151,181) 316px,rgb(68,149,182) 317px,rgb(65,146,182) 318px,rgb(62,144,183) 319px,rgb(58,142,183) 320px);-webkit-mask-image:linear-gradient(to right,transparent,#000);mask-image:linear-gradient(to right,transparent,#000)"></div>
<svg style="left:285px;top:392px" width="1081" height="320" fill="#1e2022"><rect x="0" y="0" width="1081" height="1"/><rect x="0" y="40" width="1081" height="1"/><rect x="0" y="80" width="1081" height="1"/><rect x="0" y="120" width="1081" height="1"/><rect x="0" y="160" width="1081" height="1"/><rect x="0" y="199" width="1081" height="1"/><rect x="0" y="239" width="1081" height="1"/><rect x="0" y="279" width="1081" height="1"/><rect x="0" y="319" width="1081" height="1"/><rect x="56" y="0" width="1" height="320"/><rect x="136" y="0" width="1" height="320"/><rect x="215" y="0" width="1" height="320"/><rect x="295" y="0" width="1" height="320"/><rect x="375" y="0" width="1" height="320"/><rect x="454" y="0" width="1" height="320"/><rect x="534" y="0" width="1" height="320"/><rect x="614" y="0" width="1" height="320"/><rect x="693" y="0" width="1" height="320"/><rect x="773" y="0" width="1" height="320"/><rect x="853" y="0" width="1" height="320"/><rect x="932" y="0" width="1" height="320"/><rect x="1012" y="0" width="1" height="320"/></svg>
<svg class="ic" style="left:1178px;top:337px" width="24" height="24" viewBox="0 0 24 24"><path d="M7.6 13.8L7.3 4.2Q7.3 2.7 8.7 2.7Q10 2.7 10.1 4.2L10.5 9.6L11.5 9.6L11.6 3.2Q11.6 1.7 13 1.7Q14.4 1.7 14.4 3.2L14.5 9.6L15.6 9.6L15.7 3.2Q15.8 1.7 17.1 1.7Q18.4 1.7 18.4 3.2L18.3 10L19.2 10.3L20 6.2Q20.2 4.8 21.3 4.9Q22.5 5.1 22.3 6.6L21 14.2L20.5 21.8H10.4L7.6 17.6Q5 13.6 3.3 12.5Q2.5 11.6 3.6 11Q5.6 10.6 7.6 13.8Z" fill="#4b4b4b" stroke="#4b4b4b" stroke-width="0.3"/></svg>
<div class="t" style="left:1378px;top:93px;">Layer Styling</div>
<svg class="ic" style="left:1891px;top:95px" width="12" height="12" viewBox="0 0 12 12"><rect x="0.5" y="0.5" width="10" height="10" rx="2" fill="#f4f4f5" stroke="#686868" stroke-width="1"/><path d="M4.7 4V3.4Q4.7 2.6 5.5 2.6H7.6Q8.4 2.6 8.4 3.4V5.5Q8.4 6.3 7.6 6.3H7" fill="none" stroke="#5f5f5f" stroke-width="0.9"/><rect x="2.6" y="4.4" width="4" height="4" rx="0.9" fill="#fff" stroke="#5f5f5f" stroke-width="0.9"/></svg>
<svg class="ic" style="left:1905px;top:95px" width="12" height="12" viewBox="0 0 12 12"><rect x="0.5" y="0.5" width="10" height="10" rx="2" fill="#f4f4f5" stroke="#686868" stroke-width="1"/><path d="M3.1 3.1L7.9 7.9M7.9 3.1L3.1 7.9" stroke="#5a5a5a" stroke-width="1.7"/></svg>
<div class="combo" style="left:1377px;top:113px;width:538px;height:25px;"></div>
<svg class="ic" style="left:1384px;top:117.5px" width="16" height="16" viewBox="0 0 16 16"><path d="M0.5 1.5H14.5V10.5H8.5V15.5H0.5Z" fill="#b9d3ee" stroke="#2e5a8c" stroke-width="1" stroke-linejoin="miter"/><path d="M4.5 1.5V15.5M0.5 10.5H8.5M4.5 10.5L14 1.8" fill="none" stroke="#2e5a8c" stroke-width="0.9"/><path d="M5.2 1.9H13L5.2 9.2Z" fill="#e3edf8"/><path d="M4.5 12.9H8.5" stroke="#2e5a8c" stroke-width="0.6"/></svg>
<div class="t" style="left:1403px;top:118px;">trap_steady_05_3D</div>
<svg class="ic" style="left:1897.5px;top:123.5px" width="8" height="4" viewBox="0 0 8 4"><path d="M0 0H8L4 4Z" fill="#6e7071"/></svg>
<div style="left:1418px;top:174px;width:497px;height:1px;background:#b9babb"></div>
<div style="left:1467px;top:146px;width:50px;height:29px;border:1px solid #c0c1c2;border-bottom-color:#b9babb;border-radius:3px 3px 0 0;background:linear-gradient(to bottom,#e9eaeb,#e2e3e4)"></div>
<div style="left:1516px;top:146px;width:50px;height:29px;border:1px solid #c0c1c2;border-bottom-color:#b9babb;border-radius:3px 3px 0 0;background:linear-gradient(to bottom,#e9eaeb,#e2e3e4)"></div>
<div style="left:1565px;top:146px;width:50px;height:29px;border:1px solid #c0c1c2;border-bottom-color:#b9babb;border-radius:3px 3px 0 0;background:linear-gradient(to bottom,#e9eaeb,#e2e3e4)"></div>
<div style="left:1614px;top:146px;width:49px;height:29px;border:1px solid #c0c1c2;border-bottom-color:#b9babb;border-radius:3px 3px 0 0;background:linear-gradient(to bottom,#e9eaeb,#e2e3e4)"></div>
<div style="left:1418px;top:144px;width:50px;height:31px;border:1px solid #b9babb;border-bottom:none;border-radius:3px 3px 0 0;background:linear-gradient(to bottom,#ffffff,#f4f5f6)"></div>
<svg class="ic" style="left:1430.5px;top:149px" width="20" height="20" viewBox="0 0 20 20"><path d="M3.8 3L11 10.5" stroke="#9a9a9a" stroke-width="1.3" stroke-linecap="round"/><path d="M10.8 10.2L17.6 17.6" stroke="#e8501f" stroke-width="3.2" stroke-linecap="butt"/><path d="M2.8 17.2L10.6 9.6" stroke="#2f6fa8" stroke-width="3" stroke-linecap="round"/><path d="M9.6 9.4L12.8 6.2" stroke="#9a9a9a" stroke-width="1.6"/><path d="M10.5 3.3Q14.5 1.8 17.2 6.5L18.4 7.6L16.4 9.6L15 8.4Q14 6 10.5 4.8Z" fill="#2a2d2e"/></svg>
<svg class="ic" style="left:1529px;top:150px" width="20" height="20" viewBox="0 0 20 20"><path d="M2.6 2.6L15 15" stroke="#0a0a0a" stroke-width="1.3"/><path d="M17.6 17.6L10.6 15.4L15.4 10.6Z" fill="#0a0a0a"/></svg>
<svg class="ic" style="left:1577px;top:150px" width="20" height="20" viewBox="0 0 20 20"><rect x="3" y="2.3" width="14" height="15.4" fill="#0a0a0a"/><rect x="4.4" y="3.9" width="2.6" height="2.9" fill="#fff"/><rect x="4.4" y="8.6" width="2.6" height="2.9" fill="#fff"/><rect x="4.4" y="13.3" width="2.6" height="2.9" fill="#fff"/><rect x="8.8" y="3.9" width="2.6" height="2.9" fill="#fff"/><rect x="8.8" y="8.6" width="2.6" height="2.9" fill="#fff"/><rect x="8.8" y="13.3" width="2.6" height="2.9" fill="#fff"/><rect x="13.2" y="3.9" width="2.6" height="2.9" fill="#fff"/><rect x="13.2" y="8.6" width="2.6" height="2.9" fill="#fff"/><rect x="13.2" y="13.3" width="2.6" height="2.9" fill="#fff"/></svg>
<svg class="ic" style="left:1626px;top:150px" width="20" height="20" viewBox="0 0 20 20"><path d="M0.5 13L10 8.5L19.5 13L10 18.5Z" fill="#dcdcdc" stroke="#c4c4c4" stroke-width="0.5"/><path d="M0.5 10.3L10 5.8L19.5 10.3L10 15.8Z" fill="#e9e9e9" stroke="#bdbdbd" stroke-width="0.5"/><path d="M0.5 7L10 1L19.5 6L10 12.5Z" fill="#f6f6f6" stroke="#9d9d9d" stroke-width="0.6"/><path d="M10 1L14.8 3.5L10 6.6L5.2 4Z M10 6.6L14.8 9.4L10 12.5L5.2 9.8Z" fill="#0a0a0a"/></svg>
<div style="left:1479px;top:150px;width:20px;height:20px;background:linear-gradient(135deg,#4f86d8 0%,#5fb2f0 22%,#5fe39a 45%,#8bf06a 60%,#f3e45a 78%,#fb8b5a 100%)"></div>
<svg class="ic" style="left:1383px;top:148px" width="24" height="24" viewBox="0 0 24 24"><path d="M14 11L21.6 4.8" stroke="#ab9c6c" stroke-width="2.6" stroke-linecap="round"/><path d="M3.5 12L9 6.5L17 12.5L12.5 19.6Z" fill="#b7b596"/><path d="M5 8.6L9 5.4L12.6 7.8L8 11.4Z" fill="#c3e08c"/><path d="M3 11L7.4 9L10.4 11.8L5 13.8Z" fill="#86b3e2"/><path d="M1.4 14.2L5.8 12.8L13.2 18.6L11.4 21Z" fill="#e58283"/><path d="M5.4 15L8.2 14.2L12.2 17.8L10.8 19.6Z" fill="#c2507a"/></svg>
<div style="left:1377px;top:176px;width:38px;height:792px;background:#5a5a5a"></div>
<svg class="ic" style="left:1380px;top:179px" width="24" height="24" viewBox="0 0 24 24"><path d="M6.5 8H17.5M6.5 8V17M17.5 8V17M12 10V19" fill="none" stroke="#e0922e" stroke-width="1.6"/><rect x="7" y="1.6" width="10" height="7" fill="#ee5a3a"/><path d="M9 4H10.4M13 4H14.4M11 6H12.4" stroke="#b01ec0" stroke-width="1.1"/><rect x="1" y="16" width="10" height="8" fill="#f8d93c"/><path d="M1 16.6H11" stroke="#e0922e" stroke-width="1.4"/><rect x="13" y="16" width="10" height="8" fill="#6ea3e0"/><path d="M13 16.6H23" stroke="#e0922e" stroke-width="1.4"/></svg>
<svg class="ic" style="left:1380px;top:212px" width="24" height="24" viewBox="0 0 24 24"><path d="M2 9.5Q2.5 4.5 9.5 5V1.5L15 7L9.5 12.5V9Q5 9 5.8 12.8Q2.3 13.5 2 9.5Z" fill="#7fc49a" stroke="#5da87b" stroke-width="0.5"/><path d="M21.5 16Q21 11 14 11.5V8L8.5 13.5L14 19V15.5Q18.5 15.5 16.2 20.6Q21.8 20.5 21.5 16Z" fill="#f08438" stroke="#dd6c22" stroke-width="0.5"/></svg>
<div class="view" style="left:1418px;top:185px;width:497px;height:192px;"></div>
<div style="left:1419px;top:186px;width:495px;height:21px;background:linear-gradient(to bottom,#fdfdfd,#f0f1f2);border-bottom:1px solid #b9babb"></div>
<div class="t" style="left:1421px;top:189px;">Groups</div>
<div class="t" style="left:1443px;top:208px;">Bed Elevation</div>
<div style="left:1881px;top:207px;width:16px;height:16px;background:linear-gradient(135deg,#4f86d8 0%,#5fb2f0 22%,#5fe39a 45%,#8bf06a 60%,#f3e45a 78%,#fb8b5a 100%)"></div>
<div class="t" style="left:1443px;top:225px;">temperature</div>
<svg class="ic" style="left:1426.7px;top:228.5px" width="5" height="8" viewBox="0 0 5 8"><path d="M0 0V8L5 4Z" fill="#6e7071"/></svg>
<div style="left:1881px;top:224px;width:16px;height:16px;background:linear-gradient(to right,#e6e6e6,#cfcfcf)"></div>
<div class="t" style="left:1443px;top:242px;">velocity</div>
<svg class="ic" style="left:1426.7px;top:245.5px" width="5" height="8" viewBox="0 0 5 8"><path d="M0 0V8L5 4Z" fill="#6e7071"/></svg>
<div style="left:1881px;top:241px;width:16px;height:16px;background:linear-gradient(to right,#e6e6e6,#cfcfcf)"></div>
<div class="t" style="left:1443px;top:259px;">water depth</div>
<svg class="ic" style="left:1426.7px;top:262.5px" width="5" height="8" viewBox="0 0 5 8"><path d="M0 0V8L5 4Z" fill="#6e7071"/></svg>
<div style="left:1881px;top:258px;width:16px;height:16px;background:linear-gradient(to right,#e6e6e6,#cfcfcf)"></div>
<div class="t" style="left:1443px;top:276px;">water surface elevation</div>
<svg class="ic" style="left:1426.7px;top:279.5px" width="5" height="8" viewBox="0 0 5 8"><path d="M0 0V8L5 4Z" fill="#6e7071"/></svg>
<div style="left:1881px;top:275px;width:16px;height:16px;background:linear-gradient(to right,#e6e6e6,#cfcfcf)"></div>
<svg class="ic" style="left:1898px;top:243px" width="14" height="14" viewBox="0 0 14 14"><path d="M1 1L11 11" stroke="#0a0a0a" stroke-width="0.9"/><path d="M13 13L8.6 11.8L11.8 8.6Z" fill="#0a0a0a"/></svg>
<div class="t" style="left:1418px;top:384px;">Dataset in selected group(s)</div>
<div style="left:1419px;top:409px;width:495px;height:5px;border:1px solid #b5b6b7;border-radius:3px;background:#d9dadb"></div>
<div style="left:1419px;top:409px;width:180px;height:5px;border:1px solid #2f8fc4;border-radius:3px;background:#4fb4ea"></div>
<div style="left:1593px;top:406px;width:12px;height:12px;border:1px solid #b0b1b2;border-radius:3px;background:linear-gradient(to bottom,#fdfdfd,#eff0f1)"></div>
<svg style="left:1419px;top:421px" width="495" height="4" fill="#a9aaab"><rect x="6" y="0" width="1" height="4"/><rect x="19" y="0" width="1" height="3"/><rect x="33" y="0" width="1" height="3"/><rect x="46" y="0" width="1" height="3"/><rect x="60" y="0" width="1" height="3"/><rect x="73" y="0" width="1" height="3"/><rect x="86" y="0" width="1" height="3"/><rect x="100" y="0" width="1" height="3"/><rect x="113" y="0" width="1" height="3"/><rect x="127" y="0" width="1" height="3"/><rect x="140" y="0" width="1" height="3"/><rect x="153" y="0" width="1" height="3"/><rect x="167" y="0" width="1" height="3"/><rect x="180" y="0" width="1" height="3"/><rect x="193" y="0" width="1" height="3"/><rect x="207" y="0" width="1" height="3"/><rect x="220" y="0" width="1" height="3"/><rect x="234" y="0" width="1" height="3"/><rect x="247" y="0" width="1" height="3"/><rect x="260" y="0" width="1" height="3"/><rect x="274" y="0" width="1" height="3"/><rect x="287" y="0" width="1" height="3"/><rect x="301" y="0" width="1" height="3"/><rect x="314" y="0" width="1" height="3"/><rect x="327" y="0" width="1" height="3"/><rect x="341" y="0" width="1" height="3"/><rect x="354" y="0" width="1" height="3"/><rect x="368" y="0" width="1" height="3"/><rect x="381" y="0" width="1" height="3"/><rect x="394" y="0" width="1" height="3"/><rect x="408" y="0" width="1" height="3"/><rect x="421" y="0" width="1" height="3"/><rect x="434" y="0" width="1" height="3"/><rect x="448" y="0" width="1" height="3"/><rect x="461" y="0" width="1" height="3"/><rect x="475" y="0" width="1" height="3"/><rect x="488" y="0" width="1" height="4"/></svg>
<div class="edit" style="left:1418px;top:432px;width:205px;height:25px;"></div>
<div style="left:1600px;top:433px;width:22px;height:23px;border-radius:0 2px 2px 0;background:linear-gradient(to bottom,#fdfdfd,#f0f1f2)"></div>
<div class="t" style="left:1422px;top:437px;">01.01.1990 02:10:02</div>
<svg class="ic" style="left:1606px;top:442px" width="8" height="4" viewBox="0 0 8 4"><path d="M0 0H8L4 4Z" fill="#6e7071"/></svg>
<svg class="ic" style="left:1739px;top:436px" width="16" height="16" viewBox="0 0 16 16"><path d="M4.6 1.2A3.1 3.1 0 1 0 7.6 5.6L5.8 5.4L4.6 3.6Z" fill="#f3f3f3" stroke="#8a8a8a" stroke-width="0.8"/><path d="M6.8 6.6L14 13.8" stroke="#8b7434" stroke-width="3.2" stroke-linecap="round"/><path d="M7 6.8L13.8 13.6" stroke="#ecc95f" stroke-width="2" stroke-linecap="round"/></svg>
<svg class="ic" style="left:1770.5px;top:436px" width="16" height="16" viewBox="0 0 16 16"><path d="M3.6 2.6V13.6L12.6 8.1Z" fill="#6b6d6e"/></svg>
<svg class="ic" style="left:1801px;top:436px" width="16" height="16" viewBox="0 0 16 16"><path d="M1.8 3.8H3.6V12.2H1.8Z M9 3.8V12.2L3.8 8Z M14.8 3.8V12.2L9.4 8Z" fill="#6b6d6e"/></svg>
<svg class="ic" style="left:1832px;top:436px" width="16" height="16" viewBox="0 0 16 16"><path d="M3.8 3.8H5.6V12.2H3.8Z M13 3.8V12.2L6.6 8Z" fill="#6b6d6e"/></svg>
<svg class="ic" style="left:1864px;top:436px" width="16" height="16" viewBox="0 0 16 16"><path d="M12.2 3.8H10.4V12.2H12.2Z M3 3.8V12.2L9.4 8Z" fill="#6b6d6e"/></svg>
<svg class="ic" style="left:1895px;top:436px" width="16" height="16" viewBox="0 0 16 16"><path d="M14.2 3.8H12.4V12.2H14.2Z M7 3.8V12.2L12.2 8Z M1.2 3.8V12.2L6.6 8Z" fill="#6b6d6e"/></svg>
<svg class="ic" style="left:1420px;top:470px" width="12" height="8" viewBox="0 0 12 8"><path d="M0.5 0.3H11.5L6 7.3Z" fill="#232627"/></svg>
<div class="t" style="left:1441px;top:465px;font-weight:bold;">Metadata</div>
<div class="gb" style="left:1419px;top:484px;width:496px;height:305px;"></div>
<div class="t" style="left:1430px;top:495px;font-size:15px;line-height:18px;font-weight:bold;">Scalar dataset</div>
<div class="t" style="left:1432px;top:516px;">Is valid</div>
<div class="t" style="left:1501px;top:516px;">Yes</div>
<div class="t" style="left:1432px;top:535px;">Time</div>
<div class="t" style="left:1501px;top:535px;">01.01.1990 00:00:00 (0)</div>
<div class="t" style="left:1432px;top:554px;">Mesh type</div>
<div class="t" style="left:1501px;top:554px;">faces</div>
<div class="t" style="left:1432px;top:573px;">Data type</div>
<div class="t" style="left:1501px;top:573px;">vertices</div>
<div class="t" style="left:1432px;top:592px;">Is vector</div>
<div class="t" style="left:1501px;top:592px;">No</div>
<div class="t" style="left:1432px;top:611px;">name</div>
<div class="t" style="left:1501px;top:611px;">Bed Elevation</div>
<div class="t" style="left:1430px;top:643px;font-size:15px;line-height:18px;font-weight:bold;">Vector dataset</div>
<div class="t" style="left:1432px;top:664px;">Is valid</div>
<div class="t" style="left:1501px;top:664px;">Yes</div>
<div class="t" style="left:1432px;top:683px;">Time</div>
<div class="t" style="left:1501px;top:683px;">01.01.1990 02:10:02 (2.16746)</div>
<div class="t" style="left:1432px;top:702px;">Mesh type</div>
<div class="t" style="left:1501px;top:702px;">faces</div>
<div class="t" style="left:1432px;top:721px;">Data type</div>
<div class="t" style="left:1501px;top:721px;">volumes</div>
<div class="t" style="left:1432px;top:740px;">Is vector</div>
<div class="t" style="left:1501px;top:740px;">Yes</div>
<div class="t" style="left:1432px;top:759px;">name</div>
<div class="t" style="left:1501px;top:759px;">velocity</div>
<svg class="ic" style="left:1420px;top:802px" width="12" height="8" viewBox="0 0 12 8"><path d="M0.5 0.3H11.5L6 7.3Z" fill="#232627"/></svg>
<div class="t" style="left:1440px;top:797px;font-weight:bold;">Layer Rendering</div>
<div class="gb" style="left:1419px;top:816px;width:496px;height:48px;"></div>
<div class="t" style="left:1430px;top:832px;">Blending mode</div>
<div class="combo" style="left:1670px;top:827px;width:233px;height:25px;"></div>
<div class="t" style="left:1675px;top:832px;">Normal</div>
<svg class="ic" style="left:1886px;top:837.5px" width="8" height="4" viewBox="0 0 8 4"><path d="M0 0H8L4 4Z" fill="#6e7071"/></svg>
<div class="btn" style="left:1418px;top:944px;width:25px;height:25px;"></div>
<div class="btn" style="left:1449px;top:944px;width:25px;height:25px;"></div>
<svg class="ic" style="left:1423px;top:948.5px" width="16" height="16" viewBox="0 0 16 16"><path d="M1.6 6.2L6.6 1.2V4.2Q13.6 4.2 14 9.8Q14 13.8 9.6 14.8Q8.2 13.6 8.6 12Q11 11.4 10.6 9.6Q10 8.2 6.6 8.4V11.4Z" fill="#f08438" stroke="#dd6c22" stroke-width="0.5"/></svg>
<svg class="ic" style="left:1453.5px;top:948.5px" width="16" height="16" viewBox="0 0 16 16"><path d="M14.4 6.2L9.4 1.2V4.2Q2.4 4.2 2 9.8Q2 13.8 6.4 14.8Q7.8 13.6 7.4 12Q5 11.4 5.4 9.6Q6 8.2 9.4 8.4V11.4Z" fill="#7fc49a" stroke="#5da87b" stroke-width="0.5"/></svg>
<div class="chk" style="left:1727px;top:948px;width:14px;height:14px;"></div>
<svg class="ic" style="left:1729px;top:950px" width="10" height="10" viewBox="0 0 10 10"><path d="M1.2 5.2L3.8 8.6L8.6 0.8" fill="none" stroke="#232627" stroke-width="1.7"/></svg>
<div class="t" style="left:1746px;top:948px;">Live update</div>
<div class="btn" style="left:1835px;top:944px;width:80px;height:23px;"></div>
<svg class="ic" style="left:1849px;top:950px" width="13" height="11" viewBox="0 0 13 11"><path d="M0.6 6.2L4 9.6L12.4 1.2" fill="none" stroke="#232627" stroke-width="1.1"/></svg>
<div class="t" style="left:1865px;top:948px;">Apply</div>
<div class="edit" style="left:2px;top:974px;width:270px;height:25px;"></div>
<svg class="ic" style="left:9px;top:978px" width="16" height="16" viewBox="0 0 16 16"><circle cx="6.6" cy="6.6" r="4.6" fill="none" stroke="#a3a5a6" stroke-width="1.5"/><path d="M10 10L14.4 14.4" stroke="#a3a5a6" stroke-width="1.9" stroke-linecap="round"/></svg>
<div class="t" style="left:32px;top:979px;color:#9fa1a2;">Type to locate (Ctrl+K)</div>
<div class="t" style="left:1146px;top:982px;font-size:10px;line-height:12px;">Coordinate</div>
<div class="edit" style="left:1204px;top:975px;width:73px;height:23px;"></div>
<div class="t" style="left:1210px;top:981px;font-size:10px;line-height:12px;">717.3,113.7</div>
<svg class="ic" style="left:1281px;top:977px" width="18" height="18" viewBox="0 0 18 18"><g transform="rotate(-30 9 9)"><rect x="4.6" y="1.2" width="8.8" height="15.4" rx="4.2" fill="#fff" stroke="#0c0c0c" stroke-width="1.5"/><path d="M5 8H13M7.6 1.6V8M10.4 1.6V8" stroke="#0c0c0c" stroke-width="1.4"/><ellipse cx="9" cy="12" rx="1.7" ry="1.1" fill="none" stroke="#0c0c0c" stroke-width="0.9"/></g><path d="M12.6 4.2L16.4 1.4" stroke="#1a1a1a" stroke-width="1" stroke-dasharray="1.2 1"/><circle cx="1.2" cy="11.8" r="0.7" fill="#888"/></svg>
<div class="t" style="left:1311px;top:981px;font-size:10px;line-height:12px;">Scale</div>
<div class="edit" style="left:1341px;top:974px;width:97px;height:25px;"></div>
<div style="left:1416px;top:975px;width:21px;height:23px;border-radius:0 2px 2px 0;background:linear-gradient(to bottom,#fdfdfd,#f0f1f2)"></div>
<div class="t" style="left:1345px;top:981px;font-size:10px;line-height:12px;">1:52008321</div>
<svg class="ic" style="left:1421.5px;top:984px" width="8" height="4" viewBox="0 0 8 4"><path d="M0 0H8L4 4Z" fill="#6e7071"/></svg>
<svg class="ic" style="left:1448.5px;top:979px" width="16" height="16" viewBox="0 0 16 16"><path d="M4.4 7.6V5.2A3.6 3.6 0 0 1 11.6 5.2V7.6" fill="none" stroke="#7b7b7b" stroke-width="1.7"/><path d="M5.6 7.6V5.4A2.4 2.4 0 0 1 10.4 5.4V7.6" fill="none" stroke="#d8d8d8" stroke-width="0.8"/><rect x="1.8" y="7.4" width="12.4" height="8.2" rx="1.2" fill="#636363"/></svg>
<div class="t" style="left:1473px;top:982px;font-size:10px;line-height:12px;">Magnifier</div>
<div class="edit" style="left:1523px;top:975px;width:98px;height:24px;"></div>
<div class="t" style="left:1528px;top:982px;font-size:10px;line-height:12px;">100%</div>
<div class="t" style="left:1630px;top:982px;font-size:10px;line-height:12px;">Rotation</div>
<div class="edit" style="left:1681px;top:975px;width:94px;height:24px;"></div>
<div class="t" style="left:1686px;top:981px;font-size:10px;line-height:12px;">0,0 °</div>
<div style="left:1606px;top:976px;width:14px;height:22px;border-left:1px solid #adaeaf;border-radius:0 2px 2px 0;background:linear-gradient(to bottom,#fdfdfd,#f0f1f2)"></div>
<svg class="ic" style="left:1609px;top:979px" width="8" height="16" viewBox="0 0 8 16"><path d="M0 5.6H8L4 1.6Z M0 11H8L4 15Z" fill="#6e7071"/></svg>
<div style="left:1760px;top:976px;width:14px;height:22px;border-left:1px solid #adaeaf;border-radius:0 2px 2px 0;background:linear-gradient(to bottom,#fdfdfd,#f0f1f2)"></div>
<svg class="ic" style="left:1763px;top:979px" width="8" height="16" viewBox="0 0 8 16"><path d="M0 5.6H8L4 1.6Z M0 11H8L4 15Z" fill="#6e7071"/></svg>
<div class="chk" style="left:1781px;top:979px;width:14px;height:14px;"></div>
<svg class="ic" style="left:1783px;top:981px" width="10" height="10" viewBox="0 0 10 10"><path d="M1.2 5.2L3.8 8.6L8.6 0.8" fill="none" stroke="#232627" stroke-width="1.7"/></svg>
<div class="t" style="left:1800px;top:981px;font-size:10px;line-height:12px;">Render</div>
<svg class="ic" style="left:1851px;top:978px" width="18" height="18" viewBox="0 0 18 18"><ellipse cx="9" cy="9.5" rx="8" ry="6.6" fill="#d6d7d8"/><path d="M1 9.5H17M9 3V16" stroke="#eeeeee" stroke-width="0.9"/><path d="M2.2 2.4L15.8 16.6M15.8 2.4L2.2 16.6" stroke="#5c5c5c" stroke-width="2.3"/></svg>
<svg class="ic" style="left:1894px;top:978px" width="18" height="18" viewBox="0 0 18 18"><path d="M9 2Q17.4 2 17.4 8.6Q17.4 12.6 14 14.4Q14.6 16.6 16.6 17.4Q12.8 17.6 11.4 15.4Q9 15.8 6.6 15Q0.6 13.6 0.6 8.6Q0.6 2 9 2Z" fill="#5c5c5c"/><circle cx="4.8" cy="9" r="1.4" fill="#fff"/><circle cx="9" cy="9" r="1.4" fill="#fff"/><circle cx="13.2" cy="9" r="1.4" fill="#fff"/></svg>
<div style="left:0px;top:999px;width:1916px;height:1px;background:#c4c5c6"></div>
</div>
</body>
</html>
